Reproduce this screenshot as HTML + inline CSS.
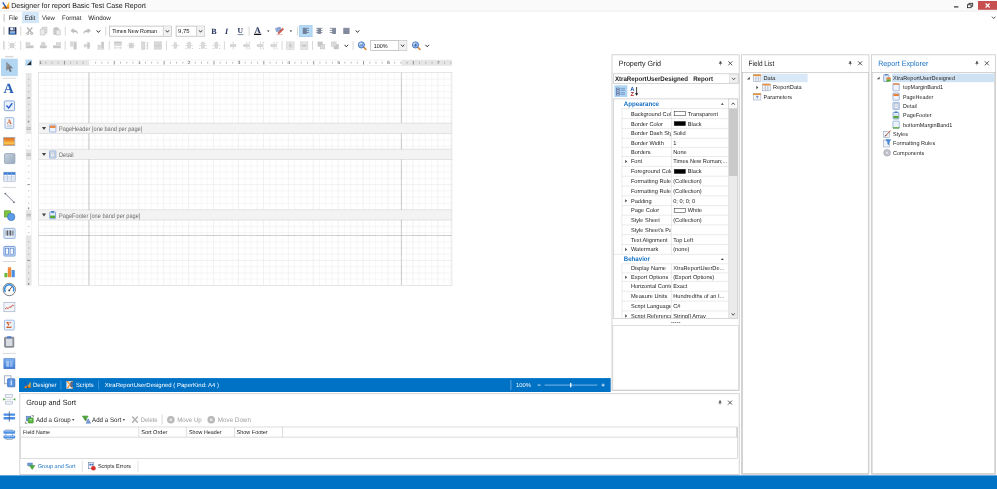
<!DOCTYPE html>
<html lang="en"><head><meta charset="utf-8"><title>Designer for report Basic Test Case Report</title>
<style>
html,body{margin:0;padding:0;background:#fff;overflow:hidden}
svg{display:block;will-change:transform;font-family:"Liberation Sans",sans-serif;text-rendering:geometricPrecision}
</style></head><body>
<svg width="997" height="489" viewBox="0 0 997 489">
<defs><filter id="soft" x="-6" y="-6" width="1009" height="501" filterUnits="userSpaceOnUse"><feGaussianBlur stdDeviation="0.32"/></filter></defs>
<g filter="url(#soft)">
<rect x="-6" y="-6" width="1009" height="501" fill="#fff"/>
<rect x="-6" y="-6" width="1009" height="16.7" fill="#fafafa"/>
<line x1="-6" y1="11.05" x2="1003" y2="11.05" stroke="#ececec" stroke-width="1"/>
<g transform="translate(1.2 1.2) scale(1)">
<defs><linearGradient id="gxra" x1="0" y1="0" x2="0" y2="1"><stop offset="0" stop-color="#ffd83a"/><stop offset="1" stop-color="#ee8a1a"/></linearGradient></defs>
<path d="M0.6 7.4 L4.2 3.6 L5.2 5.2 L8 0.2 V7.4 Z" fill="url(#gxra)"/>
<path d="M0.6 7.4 H8 V6.4 H1.6 Z" fill="#d9701a"/>
<line x1="1.6" y1="1.2" x2="4.8" y2="6.4" stroke="#2c58b6" stroke-width="1.3"/>
<path d="M4.2 6.6 L5.4 6.0 L5.4 7.8 Z" fill="#222"/>
</g>
<text x="11.2" y="8.18" font-size="7.3" fill="#222" textLength="134.8" lengthAdjust="spacingAndGlyphs">Designer for report Basic Test Case Report</text>
<line x1="954" y1="6.9" x2="958.4" y2="6.9" stroke="#222" stroke-width="1.1"/>
<rect x="969" y="3.3" width="3.7" height="2.9" fill="#fafafa" stroke="#222" stroke-width="0.8"/>
<rect x="967.4" y="4.8" width="3.7" height="2.9" fill="#fafafa" stroke="#222" stroke-width="0.8"/>
<rect x="978" y="1" width="25" height="8.8" fill="#c75050"/>
<line x1="985.6" y1="3.5" x2="989.6" y2="7.5" stroke="#fff" stroke-width="1.2"/>
<line x1="985.6" y1="7.5" x2="989.6" y2="3.5" stroke="#fff" stroke-width="1.2"/>
<line x1="4.1" y1="14" x2="4.1" y2="21.6" stroke="#b4b4b4" stroke-width="0.9"/>
<rect x="22.1" y="11.7" width="16.7" height="11.4" fill="#d4e7f8"/>
<text x="8.8" y="19.68" font-size="6.4" fill="#222" textLength="9.2" lengthAdjust="spacingAndGlyphs">File</text>
<text x="24.8" y="19.68" font-size="6.4" fill="#222" textLength="10.4" lengthAdjust="spacingAndGlyphs">Edit</text>
<text x="42" y="19.68" font-size="6.4" fill="#222" textLength="12.8" lengthAdjust="spacingAndGlyphs">View</text>
<text x="62" y="19.68" font-size="6.4" fill="#222" textLength="19.4" lengthAdjust="spacingAndGlyphs">Format</text>
<text x="88.3" y="19.68" font-size="6.4" fill="#222" textLength="22.5" lengthAdjust="spacingAndGlyphs">Window</text>
<path d="M992 16.65 L993.7 18.55 L995.4 16.65" fill="none" stroke="#444" stroke-width="0.9"/>
<line x1="3.9" y1="26.7" x2="3.9" y2="34.9" stroke="#b4b4b4" stroke-width="0.9"/>
<g transform="translate(8.6 27.2)">
<path d="M0 0.4 Q0 0 0.4 0 H7.4 Q7.8 0 7.8 0.4 V7.3 H0 Z" fill="#1b2c55"/>
<rect x="1.6" y="0.3" width="4.6" height="2.8" fill="#e9eef7"/>
<rect x="4.7" y="0.6" width="1" height="1.9" fill="#1b2c55"/>
<rect x="1.2" y="4.3" width="5.4" height="2.9" fill="#4e8fd6"/>
<rect x="1.2" y="4.3" width="5.4" height="0.9" fill="#dfe9f6"/>
</g>
<line x1="20.7" y1="26.6" x2="20.7" y2="35.6" stroke="#c9c9c9" stroke-width="0.7"/>
<g transform="translate(25.8 27.2)" opacity="0.85">
<line x1="1.3" y1="0.3" x2="5.4" y2="5.2" stroke="#a4a4a4" stroke-width="1.3"/>
<line x1="6.5" y1="0.3" x2="2.4" y2="5.2" stroke="#a4a4a4" stroke-width="1.3"/>
<circle cx="1.9" cy="6.2" r="1.1" fill="#d8d8d8" stroke="#9c9c9c" stroke-width="0.9"/>
<circle cx="5.9" cy="6.2" r="1.1" fill="#d8d8d8" stroke="#9c9c9c" stroke-width="0.9"/>
</g>
<g transform="translate(40 27.2)" opacity="0.75">
<path d="M2.3 0 H6.9 V6 H2.3 Z" fill="#d6d6d6" stroke="#9a9a9a" stroke-width="0.5"/>
<path d="M0.3 1.8 H4.9 V7.8 H0.3 Z" fill="#e4e4e4" stroke="#9a9a9a" stroke-width="0.5"/>
</g>
<g transform="translate(53.4 27.2)" opacity="0.75">
<path d="M0.3 0.9 H5.2 V7.2 H0.3 Z" fill="#bdbdbd" stroke="#9a9a9a" stroke-width="0.5"/>
<rect x="1.5" y="0.1" width="2.5" height="1.4" fill="#a5a5a5"/>
<path d="M2.7 2.7 H6.9 V7.8 H2.7 Z" fill="#e8e8e8" stroke="#9a9a9a" stroke-width="0.5"/>
</g>
<line x1="65.2" y1="26.6" x2="65.2" y2="35.6" stroke="#c9c9c9" stroke-width="0.7"/>
<g transform="translate(70.3 27.8)" opacity="0.9">
<path d="M0 3 L3.4 0.2 V1.9 C6 1.9 7.9 3.4 8 6.6 C7 4.8 5.6 4.1 3.4 4.1 V5.8 Z" fill="#b9b9b9"/>
</g>
<g transform="translate(91 27.8)" opacity="0.9">
<g transform="scale(-1 1)">
<path d="M0 3 L3.4 0.2 V1.9 C6 1.9 7.9 3.4 8 6.6 C7 4.8 5.6 4.1 3.4 4.1 V5.8 Z" fill="#b9b9b9"/>
</g>
</g>
<path d="M96.6 30.4 L98.4 32.4 L100.2 30.4" fill="none" stroke="#333" stroke-width="1"/>
<line x1="105.7" y1="26.6" x2="105.7" y2="35.6" stroke="#c9c9c9" stroke-width="0.7"/>
<rect x="109.4" y="26.1" width="62.1" height="10.1" fill="#fff" stroke="#b2b2b2" stroke-width="0.7"/>
<rect x="163.3" y="26.4" width="7.9" height="9.5" fill="#f1f1f1"/>
<line x1="163.3" y1="26.1" x2="163.3" y2="36.2" stroke="#b9b9b9" stroke-width="0.6"/>
<path d="M165.8 30.3 L167.4 32.2 L169 30.3" fill="none" stroke="#333" stroke-width="0.95"/>
<text x="112.2" y="33.17" font-size="5.8" fill="#111" textLength="44.8" lengthAdjust="spacingAndGlyphs">Times New Roman</text>
<rect x="176.1" y="26.1" width="28.6" height="10.1" fill="#fff" stroke="#b2b2b2" stroke-width="0.7"/>
<rect x="196.5" y="26.4" width="7.9" height="9.5" fill="#f1f1f1"/>
<line x1="196.5" y1="26.1" x2="196.5" y2="36.2" stroke="#b9b9b9" stroke-width="0.6"/>
<path d="M199 30.3 L200.6 32.2 L202.2 30.3" fill="none" stroke="#333" stroke-width="0.95"/>
<text x="178.1" y="33.17" font-size="5.8" fill="#111" textLength="11.5" lengthAdjust="spacingAndGlyphs">9,75</text>
<text x="211.2" y="33.72" font-size="8" fill="#26355e" font-weight="bold" font-family="'Liberation Serif', serif">B</text>
<text x="224.9" y="33.72" font-size="8" fill="#26355e" font-weight="bold" font-style="italic" font-family="'Liberation Serif', serif">I</text>
<text x="237.6" y="33.38" font-size="7.6" fill="#26355e" font-weight="bold" font-family="'Liberation Serif', serif">U</text>
<line x1="237.6" y1="34.6" x2="243.4" y2="34.6" stroke="#26355e" stroke-width="0.6"/>
<line x1="249.1" y1="26.6" x2="249.1" y2="35.6" stroke="#c9c9c9" stroke-width="0.7"/>
<text x="254.5" y="32.82" font-size="8.6" fill="#26355e" font-weight="bold" font-family="'Liberation Serif', serif">A</text>
<rect x="254" y="33.7" width="7.2" height="1.3" fill="#111"/>
<path d="M267.1 30.55 h2.4 l-1.2 1.5 z" fill="#222"/>
<g transform="translate(275.2 26.8)">
<path d="M0.2 1.6 L5 0.2 L6.2 3.8 L1.4 5.2 Z" fill="#b4c8e6" stroke="#4f6fb0" stroke-width="0.45"/>
<path d="M1.2 2.4 L4.6 1.4 M1.8 3.8 L5.2 2.8" fill="none" stroke="#3f5fa8" stroke-width="0.5"/>
<path d="M3.2 5.4 L7.4 1.2 L8.6 2.4 L4.4 6.6 L2.8 7 Z" fill="#d8564a" stroke="#9a3530" stroke-width="0.3"/>
<rect x="1.2" y="7.4" width="6.2" height="0.9" fill="#e7b1b1"/>
</g>
<path d="M289.7 30.55 h2.4 l-1.2 1.5 z" fill="#222"/>
<line x1="297.5" y1="26.6" x2="297.5" y2="35.6" stroke="#c9c9c9" stroke-width="0.7"/>
<rect x="299" y="25.1" width="13.6" height="11.9" fill="#a8d1f0"/>
<rect x="300" y="26.1" width="11.6" height="9.9" fill="#b6d9f4"/>
<g transform="translate(302.8 27.9)">
<rect x="0" y="0" width="6.2" height="0.66" fill="#5d6780"/>
<rect x="0" y="1.04" width="3.8" height="0.66" fill="#5d6780"/>
<rect x="0" y="2.08" width="6.2" height="0.66" fill="#5d6780"/>
<rect x="0" y="3.12" width="3.8" height="0.66" fill="#5d6780"/>
<rect x="0" y="4.16" width="6.2" height="0.66" fill="#5d6780"/>
<rect x="0" y="5.2" width="3.8" height="0.66" fill="#5d6780"/>
<rect x="0" y="0" width="3.8" height="5.86" fill="#5d6780" opacity="0.35"/>
</g>
<g transform="translate(316.2 27.9)">
<rect x="0" y="0" width="6.2" height="0.66" fill="#5d6780"/>
<rect x="1.4" y="1.04" width="3.4" height="0.66" fill="#5d6780"/>
<rect x="0" y="2.08" width="6.2" height="0.66" fill="#5d6780"/>
<rect x="1.4" y="3.12" width="3.4" height="0.66" fill="#5d6780"/>
<rect x="0" y="4.16" width="6.2" height="0.66" fill="#5d6780"/>
<rect x="1.4" y="5.2" width="3.4" height="0.66" fill="#5d6780"/>
<rect x="1.4" y="0" width="3.4" height="5.86" fill="#5d6780" opacity="0.35"/>
</g>
<g transform="translate(329.8 27.9)">
<rect x="0" y="0" width="6.2" height="0.66" fill="#5d6780"/>
<rect x="2.4" y="1.04" width="3.8" height="0.66" fill="#5d6780"/>
<rect x="0" y="2.08" width="6.2" height="0.66" fill="#5d6780"/>
<rect x="2.4" y="3.12" width="3.8" height="0.66" fill="#5d6780"/>
<rect x="0" y="4.16" width="6.2" height="0.66" fill="#5d6780"/>
<rect x="2.4" y="5.2" width="3.8" height="0.66" fill="#5d6780"/>
<rect x="2.4" y="0" width="3.8" height="5.86" fill="#5d6780" opacity="0.35"/>
</g>
<g transform="translate(343.3 27.9)">
<rect x="0" y="0" width="6.2" height="0.66" fill="#5d6780"/>
<rect x="0" y="1.04" width="6.2" height="0.66" fill="#5d6780"/>
<rect x="0" y="2.08" width="6.2" height="0.66" fill="#5d6780"/>
<rect x="0" y="3.12" width="6.2" height="0.66" fill="#5d6780"/>
<rect x="0" y="4.16" width="6.2" height="0.66" fill="#5d6780"/>
<rect x="0" y="5.2" width="6.2" height="0.66" fill="#5d6780"/>
<rect x="0" y="0" width="6.2" height="5.86" fill="#5d6780" opacity="0.35"/>
</g>
<path d="M355.7 30.4 L357.5 32.4 L359.3 30.4" fill="none" stroke="#333" stroke-width="1"/>
<line x1="3.9" y1="41.2" x2="3.9" y2="49.6" stroke="#b4b4b4" stroke-width="0.9"/>
<g transform="translate(8 41.6)" opacity="0.62">
<rect x="0" y="0" width="0.7" height="0.7" fill="#a6a6a6"/>
<rect x="0" y="3.6" width="0.7" height="0.7" fill="#a6a6a6"/>
<rect x="0" y="7.1" width="0.7" height="0.7" fill="#a6a6a6"/>
<rect x="3.6" y="0" width="0.7" height="0.7" fill="#a6a6a6"/>
<rect x="3.6" y="7.1" width="0.7" height="0.7" fill="#a6a6a6"/>
<rect x="7.1" y="0" width="0.7" height="0.7" fill="#a6a6a6"/>
<rect x="7.1" y="3.6" width="0.7" height="0.7" fill="#a6a6a6"/>
<rect x="7.1" y="7.1" width="0.7" height="0.7" fill="#a6a6a6"/>
<rect x="2" y="2" width="4" height="4" fill="#c4c4c4" stroke="#a6a6a6" stroke-width="0.5"/>
<line x1="0.8" y1="0.8" x2="7.2" y2="7.2" stroke="#a6a6a6" stroke-width="0.5"/>
<line x1="7.2" y1="0.8" x2="0.8" y2="7.2" stroke="#a6a6a6" stroke-width="0.5"/>
</g>
<line x1="20.7" y1="41" x2="20.7" y2="50" stroke="#c9c9c9" stroke-width="0.7"/>
<g transform="translate(25.7 41.6)" opacity="0.62">
<rect x="0.5" y="1" width="3.8" height="2.3" fill="#c4c4c4" stroke="#a6a6a6" stroke-width="0.4"/>
<rect x="0.5" y="4.1" width="7" height="2.3" fill="#a6a6a6" stroke="#a6a6a6" stroke-width="0.4"/>
<line x1="0.2" y1="0.4" x2="0.2" y2="7" stroke="#a6a6a6" stroke-width="0.4"/>
</g>
<g transform="translate(39.6 41.6)" opacity="0.62">
<rect x="2" y="1" width="3.4" height="2.3" fill="#c4c4c4" stroke="#a6a6a6" stroke-width="0.4"/>
<rect x="0.5" y="4.1" width="6.4" height="2.3" fill="#a6a6a6" stroke="#a6a6a6" stroke-width="0.4"/>
<line x1="3.7" y1="0.2" x2="3.7" y2="7.2" stroke="#a6a6a6" stroke-width="0.4"/>
</g>
<g transform="translate(53.2 41.6)" opacity="0.62">
<rect x="3.2" y="1" width="3.8" height="2.3" fill="#c4c4c4" stroke="#a6a6a6" stroke-width="0.4"/>
<rect x="0" y="4.1" width="7" height="2.3" fill="#a6a6a6" stroke="#a6a6a6" stroke-width="0.4"/>
<line x1="7.3" y1="0.4" x2="7.3" y2="7" stroke="#a6a6a6" stroke-width="0.4"/>
</g>
<line x1="65.2" y1="41" x2="65.2" y2="50" stroke="#c9c9c9" stroke-width="0.7"/>
<g transform="translate(69.9 41.6)" opacity="0.62">
<line x1="0" y1="0.4" x2="7" y2="0.4" stroke="#a6a6a6" stroke-width="0.7"/>
<rect x="0.6" y="1.2" width="2.4" height="3.4" fill="#c4c4c4" stroke="#a6a6a6" stroke-width="0.4"/>
<rect x="4" y="1.2" width="2.4" height="6.4" fill="#a6a6a6" stroke="#a6a6a6" stroke-width="0.4"/>
</g>
<g transform="translate(83.6 41.6)" opacity="0.62">
<line x1="0" y1="4" x2="7" y2="4" stroke="#a6a6a6" stroke-width="0.6"/>
<rect x="0.6" y="2.6" width="2.2" height="2.8" fill="#c4c4c4" stroke="#a6a6a6" stroke-width="0.4"/>
<rect x="3.8" y="1" width="2.2" height="6" fill="#a6a6a6" stroke="#a6a6a6" stroke-width="0.4"/>
</g>
<g transform="translate(97.4 41.6)" opacity="0.62">
<line x1="0" y1="7.6" x2="7" y2="7.6" stroke="#a6a6a6" stroke-width="0.7"/>
<rect x="0.6" y="3.4" width="2.4" height="3.4" fill="#c4c4c4" stroke="#a6a6a6" stroke-width="0.4"/>
<rect x="4" y="0.4" width="2.4" height="6.4" fill="#a6a6a6" stroke="#a6a6a6" stroke-width="0.4"/>
</g>
<line x1="109.3" y1="41" x2="109.3" y2="50" stroke="#c9c9c9" stroke-width="0.7"/>
<g transform="translate(114 41.6)" opacity="0.62">
<rect x="0.3" y="0.3" width="7.2" height="3.6" fill="#c4c4c4" stroke="#a6a6a6" stroke-width="0.5"/>
<rect x="0.3" y="0.3" width="7.2" height="1.1" fill="#a6a6a6"/>
<line x1="0.3" y1="6.2" x2="7.5" y2="6.2" stroke="#a6a6a6" stroke-width="0.6"/>
<path d="M2 5 L0.6 6.2 L2 7.4 M5.8 5 L7.2 6.2 L5.8 7.4" fill="none" stroke="#a6a6a6" stroke-width="0.6"/>
</g>
<g transform="translate(127.2 41.6)" opacity="0.62">
<rect x="2" y="2" width="4" height="4" fill="#c4c4c4" stroke="#a6a6a6" stroke-width="0.5"/>
<line x1="4" y1="4" x2="4" y2="0" stroke="#a6a6a6" stroke-width="0.5"/>
<line x1="4" y1="4" x2="4" y2="8" stroke="#a6a6a6" stroke-width="0.5"/>
<line x1="4" y1="4" x2="0" y2="4" stroke="#a6a6a6" stroke-width="0.5"/>
<line x1="4" y1="4" x2="8" y2="4" stroke="#a6a6a6" stroke-width="0.5"/>
<line x1="4" y1="4" x2="1" y2="1" stroke="#a6a6a6" stroke-width="0.5"/>
<line x1="4" y1="4" x2="7" y2="7" stroke="#a6a6a6" stroke-width="0.5"/>
<line x1="4" y1="4" x2="1" y2="7" stroke="#a6a6a6" stroke-width="0.5"/>
<line x1="4" y1="4" x2="7" y2="1" stroke="#a6a6a6" stroke-width="0.5"/>
</g>
<g transform="translate(141.4 41.6)" opacity="0.62">
<rect x="0.3" y="0.3" width="3.2" height="7.4" fill="#c4c4c4" stroke="#a6a6a6" stroke-width="0.5"/>
<line x1="6" y1="0.4" x2="6" y2="7.6" stroke="#a6a6a6" stroke-width="0.6"/>
<path d="M4.9 2 L6 0.6 L7.1 2 M4.9 6 L6 7.4 L7.1 6" fill="none" stroke="#a6a6a6" stroke-width="0.6"/>
<circle cx="6" cy="4" r="0.9" fill="#a6a6a6"/>
</g>
<g transform="translate(154 41.6)" opacity="0.62">
<rect x="0.2" y="0.2" width="3.4" height="3.4" fill="#c4c4c4" stroke="#a6a6a6" stroke-width="0.5"/>
<rect x="0.2" y="4.2" width="3.4" height="3.4" fill="#c4c4c4" stroke="#a6a6a6" stroke-width="0.5"/>
<rect x="4.2" y="0.2" width="3.4" height="3.4" fill="#c4c4c4" stroke="#a6a6a6" stroke-width="0.5"/>
<rect x="4.2" y="4.2" width="3.4" height="3.4" fill="#c4c4c4" stroke="#a6a6a6" stroke-width="0.5"/>
<line x1="0" y1="4" x2="8" y2="4" stroke="#a6a6a6" stroke-width="0.5"/>
</g>
<line x1="166.5" y1="41" x2="166.5" y2="50" stroke="#c9c9c9" stroke-width="0.7"/>
<g transform="translate(171.5 41.6)" opacity="0.62">
<rect x="2.6" y="1.2" width="2.6" height="5.4" fill="#c4c4c4" stroke="#a6a6a6" stroke-width="0.5"/>
<line x1="0" y1="4" x2="2.4" y2="4" stroke="#a6a6a6" stroke-width="0.6"/>
<line x1="5.4" y1="4" x2="8" y2="4" stroke="#a6a6a6" stroke-width="0.6"/>
</g>
<g transform="translate(185.2 41.6)" opacity="0.62">
<rect x="2.6" y="1.2" width="2.6" height="5.4" fill="#c4c4c4" stroke="#a6a6a6" stroke-width="0.5"/>
<line x1="0" y1="4" x2="2.4" y2="4" stroke="#a6a6a6" stroke-width="0.6"/>
<line x1="5.4" y1="4" x2="8" y2="4" stroke="#a6a6a6" stroke-width="0.6"/>
<rect x="0.2" y="6.4" width="1" height="1" fill="#a6a6a6"/>
<rect x="6.6" y="6.4" width="1" height="1" fill="#a6a6a6"/>
<rect x="3.4" y="0" width="1" height="1" fill="#a6a6a6"/>
<path d="M1 2.2 L2.4 0.8 M5.4 0.8 L6.8 2.2" fill="none" stroke="#a6a6a6" stroke-width="0.5"/>
</g>
<g transform="translate(199 41.6)" opacity="0.62">
<rect x="2.6" y="1.2" width="2.6" height="5.4" fill="#c4c4c4" stroke="#a6a6a6" stroke-width="0.5"/>
<line x1="0" y1="4" x2="2.4" y2="4" stroke="#a6a6a6" stroke-width="0.6"/>
<line x1="5.4" y1="4" x2="8" y2="4" stroke="#a6a6a6" stroke-width="0.6"/>
<rect x="0.2" y="6.4" width="1" height="1" fill="#a6a6a6"/>
<rect x="6.6" y="6.4" width="1" height="1" fill="#a6a6a6"/>
<rect x="3.4" y="0" width="1" height="1" fill="#a6a6a6"/>
<path d="M1 2.2 L2.4 0.8 M5.4 0.8 L6.8 2.2" fill="none" stroke="#a6a6a6" stroke-width="0.5"/>
</g>
<g transform="translate(212.4 41.6)" opacity="0.62">
<rect x="2.6" y="1.2" width="2.6" height="5.4" fill="#c4c4c4" stroke="#a6a6a6" stroke-width="0.5"/>
<line x1="0" y1="4" x2="2.4" y2="4" stroke="#a6a6a6" stroke-width="0.6"/>
<line x1="5.4" y1="4" x2="8" y2="4" stroke="#a6a6a6" stroke-width="0.6"/>
<rect x="0.2" y="6.4" width="1" height="1" fill="#a6a6a6"/>
<rect x="6.6" y="6.4" width="1" height="1" fill="#a6a6a6"/>
<rect x="3.4" y="0" width="1" height="1" fill="#a6a6a6"/>
<path d="M1 2.2 L2.4 0.8 M5.4 0.8 L6.8 2.2" fill="none" stroke="#a6a6a6" stroke-width="0.5"/>
</g>
<line x1="224.4" y1="41" x2="224.4" y2="50" stroke="#c9c9c9" stroke-width="0.7"/>
<g transform="translate(229.2 41.6)" opacity="0.62">
<rect x="1.4" y="2.8" width="5.2" height="2.4" fill="#c4c4c4" stroke="#a6a6a6" stroke-width="0.5"/>
<line x1="4" y1="0" x2="4" y2="2.6" stroke="#a6a6a6" stroke-width="0.6"/>
<line x1="4" y1="5.4" x2="4" y2="8" stroke="#a6a6a6" stroke-width="0.6"/>
</g>
<g transform="translate(242.8 41.6)" opacity="0.62">
<rect x="1.4" y="2.8" width="5.2" height="2.4" fill="#c4c4c4" stroke="#a6a6a6" stroke-width="0.5"/>
<line x1="4" y1="0" x2="4" y2="2.6" stroke="#a6a6a6" stroke-width="0.6"/>
<line x1="4" y1="5.4" x2="4" y2="8" stroke="#a6a6a6" stroke-width="0.6"/>
<rect x="6.6" y="0.2" width="1" height="1" fill="#a6a6a6"/>
<rect x="6.6" y="6.6" width="1" height="1" fill="#a6a6a6"/>
<rect x="0.2" y="3.4" width="1" height="1" fill="#a6a6a6"/>
<path d="M5.6 1 L7 2.4 M5.6 7 L7 5.6" fill="none" stroke="#a6a6a6" stroke-width="0.5"/>
</g>
<g transform="translate(256.4 41.6)" opacity="0.62">
<rect x="1.4" y="2.8" width="5.2" height="2.4" fill="#c4c4c4" stroke="#a6a6a6" stroke-width="0.5"/>
<line x1="4" y1="0" x2="4" y2="2.6" stroke="#a6a6a6" stroke-width="0.6"/>
<line x1="4" y1="5.4" x2="4" y2="8" stroke="#a6a6a6" stroke-width="0.6"/>
<rect x="6.6" y="0.2" width="1" height="1" fill="#a6a6a6"/>
<rect x="6.6" y="6.6" width="1" height="1" fill="#a6a6a6"/>
<rect x="0.2" y="3.4" width="1" height="1" fill="#a6a6a6"/>
<path d="M5.6 1 L7 2.4 M5.6 7 L7 5.6" fill="none" stroke="#a6a6a6" stroke-width="0.5"/>
</g>
<g transform="translate(270 41.6)" opacity="0.62">
<rect x="1.4" y="2.8" width="5.2" height="2.4" fill="#c4c4c4" stroke="#a6a6a6" stroke-width="0.5"/>
<line x1="4" y1="0" x2="4" y2="2.6" stroke="#a6a6a6" stroke-width="0.6"/>
<line x1="4" y1="5.4" x2="4" y2="8" stroke="#a6a6a6" stroke-width="0.6"/>
<rect x="6.6" y="0.2" width="1" height="1" fill="#a6a6a6"/>
<rect x="6.6" y="6.6" width="1" height="1" fill="#a6a6a6"/>
<rect x="0.2" y="3.4" width="1" height="1" fill="#a6a6a6"/>
<path d="M5.6 1 L7 2.4 M5.6 7 L7 5.6" fill="none" stroke="#a6a6a6" stroke-width="0.5"/>
</g>
<line x1="282.1" y1="41" x2="282.1" y2="50" stroke="#c9c9c9" stroke-width="0.7"/>
<g transform="translate(286.4 41.6)" opacity="0.62">
<rect x="0.3" y="0.3" width="7.4" height="7.4" fill="#dedede" stroke="#a6a6a6" stroke-width="0.5"/>
<line x1="4" y1="0.3" x2="4" y2="7.7" stroke="#a6a6a6" stroke-width="0.5"/>
<line x1="0.3" y1="2.6" x2="7.7" y2="2.6" stroke="#a6a6a6" stroke-width="0.4"/>
<line x1="0.3" y1="5.4" x2="7.7" y2="5.4" stroke="#a6a6a6" stroke-width="0.4"/>
<rect x="2.6" y="2.9" width="2.8" height="2.2" fill="#a6a6a6"/>
</g>
<g transform="translate(300.2 41.6)" opacity="0.62">
<rect x="0.3" y="0.3" width="7.4" height="7.4" fill="#dedede" stroke="#a6a6a6" stroke-width="0.5"/>
<line x1="0.3" y1="4" x2="7.7" y2="4" stroke="#a6a6a6" stroke-width="0.5"/>
<line x1="2.2" y1="0.3" x2="2.2" y2="7.7" stroke="#a6a6a6" stroke-width="0.4"/>
<line x1="5.8" y1="0.3" x2="5.8" y2="7.7" stroke="#a6a6a6" stroke-width="0.4"/>
<rect x="2.5" y="2.8" width="3" height="2.4" fill="#a6a6a6"/>
</g>
<line x1="312.5" y1="41" x2="312.5" y2="50" stroke="#c9c9c9" stroke-width="0.7"/>
<g transform="translate(317.6 41.6)" opacity="0.62">
<rect x="0.3" y="0.3" width="4.6" height="4.6" fill="#a6a6a6" stroke="#999" stroke-width="0.4"/>
<rect x="2.6" y="2.8" width="4.6" height="4.6" fill="#c4c4c4" stroke="#999" stroke-width="0.4"/>
</g>
<g transform="translate(331.2 41.6)" opacity="0.62">
<rect x="2.8" y="2.8" width="4.6" height="4.6" fill="#a6a6a6" stroke="#999" stroke-width="0.4"/>
<rect x="0.3" y="0.3" width="4.6" height="4.6" fill="#c4c4c4" stroke="#999" stroke-width="0.4"/>
</g>
<path d="M344.5 44.8 L346.3 46.8 L348.1 44.8" fill="none" stroke="#333" stroke-width="1"/>
<line x1="353.1" y1="41" x2="353.1" y2="50" stroke="#c9c9c9" stroke-width="0.7"/>
<g transform="translate(357.9 41.4)">
<line x1="5.2" y1="5.2" x2="8" y2="8" stroke="#d98a3a" stroke-width="1.5" stroke-linecap="round"/>
<circle cx="3.5" cy="3.5" r="3.1" fill="#8db4e8" stroke="#3f6cba" stroke-width="0.8"/>
<circle cx="2.9" cy="2.7" r="1.6" fill="#d9e8fa" opacity="0.9"/>
<line x1="2" y1="3.6" x2="5" y2="3.6" stroke="#2a4f9a" stroke-width="0.7"/>
</g>
<rect x="370.7" y="40.4" width="36.1" height="10.2" fill="#fff" stroke="#b2b2b2" stroke-width="0.7"/>
<rect x="398.5" y="40.7" width="8" height="9.6" fill="#f1f1f1"/>
<line x1="398.5" y1="40.4" x2="398.5" y2="50.6" stroke="#b9b9b9" stroke-width="0.6"/>
<path d="M401.05 44.65 L402.65 46.55 L404.25 44.65" fill="none" stroke="#333" stroke-width="0.95"/>
<text x="373.8" y="47.57" font-size="5.8" fill="#111" textLength="13.9" lengthAdjust="spacingAndGlyphs">100%</text>
<g transform="translate(412 41.4)">
<line x1="5.2" y1="5.2" x2="8" y2="8" stroke="#d98a3a" stroke-width="1.5" stroke-linecap="round"/>
<circle cx="3.5" cy="3.5" r="3.1" fill="#8db4e8" stroke="#3f6cba" stroke-width="0.8"/>
<circle cx="2.9" cy="2.7" r="1.6" fill="#d9e8fa" opacity="0.9"/>
<line x1="2" y1="3.6" x2="5" y2="3.6" stroke="#2a4f9a" stroke-width="0.7"/>
<line x1="3.5" y1="2.1" x2="3.5" y2="5.1" stroke="#2a4f9a" stroke-width="0.7"/>
</g>
<path d="M425.4 44.8 L427.2 46.8 L429 44.8" fill="none" stroke="#333" stroke-width="1"/>
<rect x="5.2" y="55.9" width="8.2" height="1.5" fill="#d9d9d9"/>
<rect x="1" y="58.7" width="16.8" height="17.4" fill="#b3d6f2"/>
<g transform="translate(6.6 62.3)">
<defs><linearGradient id="gptr" x1="0" y1="0" x2="1" y2="1"><stop offset="0" stop-color="#a9abae"/><stop offset="1" stop-color="#55575b"/></linearGradient></defs>
<path d="M0 0 L0 8.0 L1.9 6.3 L3.4 9.5 L4.7 8.9 L3.3 5.8 L5.9 5.7 Z" fill="url(#gptr)" stroke="#5c5e62" stroke-width="0.4"/>
</g>
<line x1="2.5" y1="78.3" x2="16" y2="78.3" stroke="#cfcfcf" stroke-width="0.8"/>
<text x="3.6" y="93.13" font-size="14.2" fill="#2a62b8" font-weight="bold" font-family="'Liberation Serif', serif">A</text>
<g transform="translate(3.9 100.5)">
<rect x="0.4" y="0.4" width="10.2" height="9.8" fill="#eaf1fb" stroke="#7ea3d8" stroke-width="0.9" rx="1"/>
<path d="M2.6 5 L4.8 7.4 L8.4 2.8" fill="none" stroke="#2a62c8" stroke-width="1.4"/>
</g>
<g transform="translate(4.6 117.3)">
<rect x="0.4" y="0.4" width="8.8" height="10.6" fill="#f2f6fc" stroke="#7ea3d8" stroke-width="0.8" rx="0.7"/>
<text x="2.2" y="6.68" font-size="7" fill="#d0602c" font-weight="bold" font-family="'Liberation Serif', serif">A</text>
<line x1="2" y1="7.8" x2="7.6" y2="7.8" stroke="#9ab" stroke-width="0.5"/>
<line x1="2" y1="9" x2="7.6" y2="9" stroke="#9ab" stroke-width="0.5"/>
</g>
<g transform="translate(3.3 137.1)">
<defs><linearGradient id="gpic" x1="0" y1="0" x2="0" y2="1"><stop offset="0" stop-color="#d9651f"/><stop offset="0.55" stop-color="#f5a63a"/><stop offset="0.7" stop-color="#fbd05a"/><stop offset="1" stop-color="#d8701f"/></linearGradient></defs>
<rect x="0.3" y="0.3" width="11.2" height="8.2" fill="url(#gpic)" stroke="#a9adb5" stroke-width="0.8"/>
</g>
<g transform="translate(4.2 153.3)">
<defs><linearGradient id="gpan" x1="0" y1="0" x2="1" y2="1"><stop offset="0" stop-color="#c9d3de"/><stop offset="1" stop-color="#98a9bd"/></linearGradient></defs>
<rect x="0.3" y="0.3" width="10.4" height="10" fill="url(#gpan)" stroke="#8a9bb0" stroke-width="0.7" rx="1"/>
</g>
<g transform="translate(3.5 171.9)">
<rect x="0.3" y="0.3" width="11.4" height="9" fill="#f6f8fb" stroke="#8ea3c4" stroke-width="0.6"/>
<rect x="0.3" y="0.3" width="11.4" height="2.6" fill="#3f7fd6"/>
<line x1="4" y1="0.3" x2="4" y2="9.3" stroke="#9fb2d0" stroke-width="0.5"/>
<line x1="7.9" y1="0.3" x2="7.9" y2="9.3" stroke="#9fb2d0" stroke-width="0.5"/>
<line x1="0.3" y1="5" x2="11.7" y2="5" stroke="#9fb2d0" stroke-width="0.5"/>
<line x1="0.3" y1="7.1" x2="11.7" y2="7.1" stroke="#9fb2d0" stroke-width="0.5"/>
</g>
<line x1="2.5" y1="187.4" x2="16" y2="187.4" stroke="#cfcfcf" stroke-width="0.8"/>
<g transform="translate(4.4 192.7)">
<line x1="0.8" y1="0.8" x2="9.6" y2="9.6" stroke="#6b7483" stroke-width="0.9"/>
<circle cx="0.9" cy="0.9" r="0.9" fill="#6b7483"/>
<circle cx="9.6" cy="9.6" r="0.9" fill="#6b7483"/>
</g>
<g transform="translate(4 210.5)">
<rect x="0.3" y="0.3" width="6.2" height="6.2" fill="#7fc243" stroke="#4f9a26" stroke-width="0.6"/>
<circle cx="7.2" cy="6.4" r="3.7" fill="#5c9be6" stroke="#2f6cc0" stroke-width="0.6"/>
</g>
<g transform="translate(3.5 228)">
<rect x="0.4" y="0.4" width="11.2" height="10" fill="#e6eefa" stroke="#7ea3d8" stroke-width="0.8" rx="0.8"/>
<rect x="2.2" y="2.4" width="0.7" height="5.2" fill="#4a4f5c"/>
<rect x="3.6" y="2.4" width="1.1" height="5.2" fill="#4a4f5c"/>
<rect x="5.4" y="2.4" width="0.6" height="5.2" fill="#4a4f5c"/>
<rect x="6.6" y="2.4" width="1.1" height="5.2" fill="#4a4f5c"/>
<rect x="8.4" y="2.4" width="0.6" height="5.2" fill="#4a4f5c"/>
<rect x="9.4" y="2.4" width="0.5" height="5.2" fill="#4a4f5c"/>
</g>
<g transform="translate(3.5 246)">
<rect x="0.4" y="0.4" width="11.2" height="9.6" fill="#dbe8fa" stroke="#5f8fd6" stroke-width="0.9" rx="0.8"/>
<rect x="2" y="2.2" width="3.2" height="6" fill="#f4f8fe" stroke="#3f6fc0" stroke-width="0.6"/>
<rect x="6.6" y="2.2" width="3.2" height="6" fill="#f4f8fe" stroke="#3f6fc0" stroke-width="0.6"/>
</g>
<line x1="2.5" y1="261.5" x2="16" y2="261.5" stroke="#cfcfcf" stroke-width="0.8"/>
<g transform="translate(4.2 267)">
<rect x="0.2" y="6" width="3" height="4.2" fill="#6ab83a" rx="0.4"/>
<rect x="3.6" y="0.2" width="3.4" height="10" fill="#ef8b3a" rx="0.4"/>
<rect x="7.4" y="3" width="3.2" height="7.2" fill="#4f8fde" rx="0.4"/>
</g>
<g transform="translate(2.8 283)">
<circle cx="6.5" cy="6.5" r="6.2" fill="#fbfbfb" stroke="#4a4a4a" stroke-width="0.7"/>
<path d="M2.6 9 A4.6 4.6 0 1 1 10.6 8.4" fill="none" stroke="#2f8be6" stroke-width="1.5"/>
<line x1="6.4" y1="7.4" x2="9.4" y2="3.4" stroke="#7a3a2a" stroke-width="0.9"/>
<circle cx="6.4" cy="7.4" r="0.9" fill="#444"/>
</g>
<g transform="translate(3.6 302)">
<rect x="0.3" y="0.3" width="11" height="9.4" fill="#f1f4f9" stroke="#a5b1c4" stroke-width="0.7"/>
<path d="M1.4 7 L3.2 5.8 L4.6 6.6 L6.2 4.6 L7.4 5.4 L9 3 L10.2 3.8" fill="none" stroke="#d04a3a" stroke-width="0.9"/>
</g>
<g transform="translate(4 319.8)">
<rect x="0.4" y="0.4" width="9.8" height="9.8" fill="#eef3fb" stroke="#8aaee0" stroke-width="0.8" rx="0.8"/>
<text x="2.1" y="8.46" font-size="9" fill="#d0602c" font-weight="bold" font-family="'Liberation Serif', serif">Σ</text>
</g>
<g transform="translate(4.2 336)">
<rect x="0.4" y="1.2" width="9.2" height="10" fill="#8f949c" stroke="#5e636b" stroke-width="0.6" rx="0.6"/>
<rect x="1.8" y="2.8" width="6.4" height="7.2" fill="#d9dde3"/>
<rect x="2.8" y="0.2" width="4.4" height="2" fill="#4f7fd0" rx="0.5"/>
</g>
<line x1="2.5" y1="353.4" x2="16" y2="353.4" stroke="#cfcfcf" stroke-width="0.8"/>
<g transform="translate(3.6 358.4)">
<defs><linearGradient id="gsub" x1="0" y1="0" x2="0" y2="1"><stop offset="0" stop-color="#7fb0ef"/><stop offset="1" stop-color="#3f7bd6"/></linearGradient></defs>
<rect x="0.3" y="0.3" width="11" height="10" fill="url(#gsub)" stroke="#3a6fc4" stroke-width="0.6"/>
<rect x="2.6" y="2.4" width="2.8" height="6" fill="#b7d2f6" opacity="0.8"/>
<rect x="6.2" y="2.4" width="2.8" height="6" fill="#9cc0f2" opacity="0.8"/>
</g>
<g transform="translate(4 375.4)">
<rect x="0.4" y="0.4" width="6.6" height="8" fill="#f7f9fc" stroke="#8a9ab3" stroke-width="0.7"/>
<rect x="3.6" y="3.4" width="7.2" height="8" fill="#5b93e2" stroke="#2f63b6" stroke-width="0.7" rx="0.5"/>
<rect x="6.7" y="5.4" width="1" height="4.4" fill="#fff"/>
<rect x="6.7" y="4.2" width="1" height="0.8" fill="#fff"/>
</g>
<g transform="translate(3.3 394.3)">
<rect x="2.4" y="0.2" width="7" height="3" fill="#eef2f8" stroke="#9aa8bd" stroke-width="0.5"/>
<rect x="2.4" y="6.8" width="7" height="3" fill="#eef2f8" stroke="#9aa8bd" stroke-width="0.5"/>
<line x1="0" y1="5" x2="12" y2="5" stroke="#8a93a3" stroke-width="0.5" stroke-dasharray="1 0.7"/>
<path d="M0 3.6 L2 5 L0 6.4 Z" fill="#3fa83a"/>
<path d="M12 3.6 L10 5 L12 6.4 Z" fill="#3fa83a"/>
</g>
<g transform="translate(3.3 411.4)">
<rect x="0.2" y="2" width="11.6" height="2.3" fill="#4a8fe4" rx="0.7"/>
<rect x="0.2" y="5.7" width="11.6" height="2.3" fill="#4a8fe4" rx="0.7"/>
<line x1="6" y1="0" x2="6" y2="10.4" stroke="#3a4c74" stroke-width="0.7"/>
</g>
<g transform="translate(3.3 430)">
<rect x="2.6" y="0" width="6.8" height="9.6" fill="none" stroke="#7585a3" stroke-width="0.55"/>
<rect x="0.2" y="0.6" width="11.6" height="3.1" fill="#4a8fe4" rx="0.9"/>
<rect x="0.2" y="5.4" width="11.6" height="3.1" fill="#4a8fe4" rx="0.9"/>
<rect x="1.2" y="1.2" width="9.6" height="0.9" fill="#9cc4f4" opacity="0.8"/>
<rect x="1.2" y="6" width="9.6" height="0.9" fill="#9cc4f4" opacity="0.8"/>
</g>
<rect x="25.4" y="59.6" width="6.6" height="6.2" fill="#b7d7f3"/>
<path d="M31.2 60.8 V65 H27 Z" fill="#2a2a2a"/>
<rect x="39.2" y="60" width="412.7" height="5.6" fill="#fff" stroke="#e6e6e6" stroke-width="0.5"/>
<rect x="39.2" y="60" width="49.95" height="5.6" fill="#e6e6e6"/>
<rect x="401.55" y="60" width="50.35" height="5.6" fill="#e6e6e6"/>
<rect x="39.1" y="61.2" width="0.4" height="3.2" fill="#e0a060" opacity="0.4"/>
<rect x="41.4" y="61.2" width="0.4" height="3.2" fill="#6a9adf" opacity="0.35"/>
<text x="39.3" y="64.33" font-size="4.5" fill="#555">1</text>
<line x1="45.73" y1="61.8" x2="45.73" y2="63.6" stroke="#8a8a8a" stroke-width="0.6"/>
<line x1="51.96" y1="61.8" x2="51.96" y2="63.6" stroke="#8a8a8a" stroke-width="0.6"/>
<line x1="58.2" y1="61.8" x2="58.2" y2="63.6" stroke="#8a8a8a" stroke-width="0.6"/>
<line x1="64.43" y1="60.9" x2="64.43" y2="64.5" stroke="#6a6a6a" stroke-width="0.7"/>
<line x1="70.66" y1="61.8" x2="70.66" y2="63.6" stroke="#8a8a8a" stroke-width="0.6"/>
<line x1="76.89" y1="61.8" x2="76.89" y2="63.6" stroke="#8a8a8a" stroke-width="0.6"/>
<line x1="83.12" y1="61.8" x2="83.12" y2="63.6" stroke="#8a8a8a" stroke-width="0.6"/>
<line x1="95.58" y1="61.8" x2="95.58" y2="63.6" stroke="#8a8a8a" stroke-width="0.6"/>
<line x1="101.81" y1="61.8" x2="101.81" y2="63.6" stroke="#8a8a8a" stroke-width="0.6"/>
<line x1="108.04" y1="61.8" x2="108.04" y2="63.6" stroke="#8a8a8a" stroke-width="0.6"/>
<line x1="114.27" y1="60.9" x2="114.27" y2="64.5" stroke="#6a6a6a" stroke-width="0.7"/>
<line x1="120.51" y1="61.8" x2="120.51" y2="63.6" stroke="#8a8a8a" stroke-width="0.6"/>
<line x1="126.74" y1="61.8" x2="126.74" y2="63.6" stroke="#8a8a8a" stroke-width="0.6"/>
<line x1="132.97" y1="61.8" x2="132.97" y2="63.6" stroke="#8a8a8a" stroke-width="0.6"/>
<rect x="137.8" y="61.2" width="0.4" height="3.2" fill="#e0a060" opacity="0.4"/>
<rect x="140.1" y="61.2" width="0.4" height="3.2" fill="#6a9adf" opacity="0.35"/>
<text x="138" y="64.33" font-size="4.5" fill="#555">1</text>
<line x1="145.43" y1="61.8" x2="145.43" y2="63.6" stroke="#8a8a8a" stroke-width="0.6"/>
<line x1="151.66" y1="61.8" x2="151.66" y2="63.6" stroke="#8a8a8a" stroke-width="0.6"/>
<line x1="157.89" y1="61.8" x2="157.89" y2="63.6" stroke="#8a8a8a" stroke-width="0.6"/>
<line x1="164.12" y1="60.9" x2="164.12" y2="64.5" stroke="#6a6a6a" stroke-width="0.7"/>
<line x1="170.35" y1="61.8" x2="170.35" y2="63.6" stroke="#8a8a8a" stroke-width="0.6"/>
<line x1="176.58" y1="61.8" x2="176.58" y2="63.6" stroke="#8a8a8a" stroke-width="0.6"/>
<line x1="182.81" y1="61.8" x2="182.81" y2="63.6" stroke="#8a8a8a" stroke-width="0.6"/>
<rect x="187.65" y="61.2" width="0.4" height="3.2" fill="#e0a060" opacity="0.4"/>
<rect x="189.95" y="61.2" width="0.4" height="3.2" fill="#6a9adf" opacity="0.35"/>
<text x="187.85" y="64.33" font-size="4.5" fill="#555">2</text>
<line x1="195.28" y1="61.8" x2="195.28" y2="63.6" stroke="#8a8a8a" stroke-width="0.6"/>
<line x1="201.51" y1="61.8" x2="201.51" y2="63.6" stroke="#8a8a8a" stroke-width="0.6"/>
<line x1="207.74" y1="61.8" x2="207.74" y2="63.6" stroke="#8a8a8a" stroke-width="0.6"/>
<line x1="213.97" y1="60.9" x2="213.97" y2="64.5" stroke="#6a6a6a" stroke-width="0.7"/>
<line x1="220.2" y1="61.8" x2="220.2" y2="63.6" stroke="#8a8a8a" stroke-width="0.6"/>
<line x1="226.43" y1="61.8" x2="226.43" y2="63.6" stroke="#8a8a8a" stroke-width="0.6"/>
<line x1="232.66" y1="61.8" x2="232.66" y2="63.6" stroke="#8a8a8a" stroke-width="0.6"/>
<rect x="237.49" y="61.2" width="0.4" height="3.2" fill="#e0a060" opacity="0.4"/>
<rect x="239.79" y="61.2" width="0.4" height="3.2" fill="#6a9adf" opacity="0.35"/>
<text x="237.69" y="64.33" font-size="4.5" fill="#555">3</text>
<line x1="245.12" y1="61.8" x2="245.12" y2="63.6" stroke="#8a8a8a" stroke-width="0.6"/>
<line x1="251.36" y1="61.8" x2="251.36" y2="63.6" stroke="#8a8a8a" stroke-width="0.6"/>
<line x1="257.59" y1="61.8" x2="257.59" y2="63.6" stroke="#8a8a8a" stroke-width="0.6"/>
<line x1="263.82" y1="60.9" x2="263.82" y2="64.5" stroke="#6a6a6a" stroke-width="0.7"/>
<line x1="270.05" y1="61.8" x2="270.05" y2="63.6" stroke="#8a8a8a" stroke-width="0.6"/>
<line x1="276.28" y1="61.8" x2="276.28" y2="63.6" stroke="#8a8a8a" stroke-width="0.6"/>
<line x1="282.51" y1="61.8" x2="282.51" y2="63.6" stroke="#8a8a8a" stroke-width="0.6"/>
<rect x="287.34" y="61.2" width="0.4" height="3.2" fill="#e0a060" opacity="0.4"/>
<rect x="289.64" y="61.2" width="0.4" height="3.2" fill="#6a9adf" opacity="0.35"/>
<text x="287.54" y="64.33" font-size="4.5" fill="#555">4</text>
<line x1="294.97" y1="61.8" x2="294.97" y2="63.6" stroke="#8a8a8a" stroke-width="0.6"/>
<line x1="301.2" y1="61.8" x2="301.2" y2="63.6" stroke="#8a8a8a" stroke-width="0.6"/>
<line x1="307.44" y1="61.8" x2="307.44" y2="63.6" stroke="#8a8a8a" stroke-width="0.6"/>
<line x1="313.67" y1="60.9" x2="313.67" y2="64.5" stroke="#6a6a6a" stroke-width="0.7"/>
<line x1="319.9" y1="61.8" x2="319.9" y2="63.6" stroke="#8a8a8a" stroke-width="0.6"/>
<line x1="326.13" y1="61.8" x2="326.13" y2="63.6" stroke="#8a8a8a" stroke-width="0.6"/>
<line x1="332.36" y1="61.8" x2="332.36" y2="63.6" stroke="#8a8a8a" stroke-width="0.6"/>
<rect x="337.19" y="61.2" width="0.4" height="3.2" fill="#e0a060" opacity="0.4"/>
<rect x="339.49" y="61.2" width="0.4" height="3.2" fill="#6a9adf" opacity="0.35"/>
<text x="337.39" y="64.33" font-size="4.5" fill="#555">5</text>
<line x1="344.82" y1="61.8" x2="344.82" y2="63.6" stroke="#8a8a8a" stroke-width="0.6"/>
<line x1="351.05" y1="61.8" x2="351.05" y2="63.6" stroke="#8a8a8a" stroke-width="0.6"/>
<line x1="357.28" y1="61.8" x2="357.28" y2="63.6" stroke="#8a8a8a" stroke-width="0.6"/>
<line x1="363.51" y1="60.9" x2="363.51" y2="64.5" stroke="#6a6a6a" stroke-width="0.7"/>
<line x1="369.75" y1="61.8" x2="369.75" y2="63.6" stroke="#8a8a8a" stroke-width="0.6"/>
<line x1="375.98" y1="61.8" x2="375.98" y2="63.6" stroke="#8a8a8a" stroke-width="0.6"/>
<line x1="382.21" y1="61.8" x2="382.21" y2="63.6" stroke="#8a8a8a" stroke-width="0.6"/>
<rect x="387.04" y="61.2" width="0.4" height="3.2" fill="#e0a060" opacity="0.4"/>
<rect x="389.34" y="61.2" width="0.4" height="3.2" fill="#6a9adf" opacity="0.35"/>
<text x="387.24" y="64.33" font-size="4.5" fill="#555">6</text>
<line x1="394.67" y1="61.8" x2="394.67" y2="63.6" stroke="#8a8a8a" stroke-width="0.6"/>
<line x1="400.9" y1="61.8" x2="400.9" y2="63.6" stroke="#8a8a8a" stroke-width="0.6"/>
<line x1="407.13" y1="61.8" x2="407.13" y2="63.6" stroke="#8a8a8a" stroke-width="0.6"/>
<line x1="413.36" y1="60.9" x2="413.36" y2="64.5" stroke="#6a6a6a" stroke-width="0.7"/>
<line x1="419.59" y1="61.8" x2="419.59" y2="63.6" stroke="#8a8a8a" stroke-width="0.6"/>
<line x1="425.82" y1="61.8" x2="425.82" y2="63.6" stroke="#8a8a8a" stroke-width="0.6"/>
<line x1="432.06" y1="61.8" x2="432.06" y2="63.6" stroke="#8a8a8a" stroke-width="0.6"/>
<rect x="436.89" y="61.2" width="0.4" height="3.2" fill="#e0a060" opacity="0.4"/>
<rect x="439.19" y="61.2" width="0.4" height="3.2" fill="#6a9adf" opacity="0.35"/>
<text x="437.09" y="64.33" font-size="4.5" fill="#555">7</text>
<line x1="444.52" y1="61.8" x2="444.52" y2="63.6" stroke="#8a8a8a" stroke-width="0.6"/>
<line x1="450.75" y1="61.8" x2="450.75" y2="63.6" stroke="#8a8a8a" stroke-width="0.6"/>
<rect x="38.6" y="72.6" width="413.3" height="213" fill="#fff"/>
<rect x="25.8" y="73" width="5.8" height="212.6" fill="#e6e6e6"/>
<line x1="45.33" y1="73" x2="45.33" y2="123.5" stroke="#efefef" stroke-width="0.52"/>
<line x1="51.56" y1="73" x2="51.56" y2="123.5" stroke="#efefef" stroke-width="0.52"/>
<line x1="57.79" y1="73" x2="57.79" y2="123.5" stroke="#efefef" stroke-width="0.52"/>
<line x1="64.02" y1="73" x2="64.02" y2="123.5" stroke="#e4e4e4" stroke-width="0.52"/>
<line x1="70.25" y1="73" x2="70.25" y2="123.5" stroke="#efefef" stroke-width="0.52"/>
<line x1="76.49" y1="73" x2="76.49" y2="123.5" stroke="#efefef" stroke-width="0.52"/>
<line x1="82.72" y1="73" x2="82.72" y2="123.5" stroke="#efefef" stroke-width="0.52"/>
<line x1="88.95" y1="73" x2="88.95" y2="123.5" stroke="#e4e4e4" stroke-width="0.52"/>
<line x1="95.18" y1="73" x2="95.18" y2="123.5" stroke="#efefef" stroke-width="0.52"/>
<line x1="101.41" y1="73" x2="101.41" y2="123.5" stroke="#efefef" stroke-width="0.52"/>
<line x1="107.64" y1="73" x2="107.64" y2="123.5" stroke="#efefef" stroke-width="0.52"/>
<line x1="113.87" y1="73" x2="113.87" y2="123.5" stroke="#e4e4e4" stroke-width="0.52"/>
<line x1="120.1" y1="73" x2="120.1" y2="123.5" stroke="#efefef" stroke-width="0.52"/>
<line x1="126.33" y1="73" x2="126.33" y2="123.5" stroke="#efefef" stroke-width="0.52"/>
<line x1="132.56" y1="73" x2="132.56" y2="123.5" stroke="#efefef" stroke-width="0.52"/>
<line x1="138.8" y1="73" x2="138.8" y2="123.5" stroke="#e4e4e4" stroke-width="0.52"/>
<line x1="145.03" y1="73" x2="145.03" y2="123.5" stroke="#efefef" stroke-width="0.52"/>
<line x1="151.26" y1="73" x2="151.26" y2="123.5" stroke="#efefef" stroke-width="0.52"/>
<line x1="157.49" y1="73" x2="157.49" y2="123.5" stroke="#efefef" stroke-width="0.52"/>
<line x1="163.72" y1="73" x2="163.72" y2="123.5" stroke="#e4e4e4" stroke-width="0.52"/>
<line x1="169.95" y1="73" x2="169.95" y2="123.5" stroke="#efefef" stroke-width="0.52"/>
<line x1="176.18" y1="73" x2="176.18" y2="123.5" stroke="#efefef" stroke-width="0.52"/>
<line x1="182.41" y1="73" x2="182.41" y2="123.5" stroke="#efefef" stroke-width="0.52"/>
<line x1="188.64" y1="73" x2="188.64" y2="123.5" stroke="#e4e4e4" stroke-width="0.52"/>
<line x1="194.88" y1="73" x2="194.88" y2="123.5" stroke="#efefef" stroke-width="0.52"/>
<line x1="201.11" y1="73" x2="201.11" y2="123.5" stroke="#efefef" stroke-width="0.52"/>
<line x1="207.34" y1="73" x2="207.34" y2="123.5" stroke="#efefef" stroke-width="0.52"/>
<line x1="213.57" y1="73" x2="213.57" y2="123.5" stroke="#e4e4e4" stroke-width="0.52"/>
<line x1="219.8" y1="73" x2="219.8" y2="123.5" stroke="#efefef" stroke-width="0.52"/>
<line x1="226.03" y1="73" x2="226.03" y2="123.5" stroke="#efefef" stroke-width="0.52"/>
<line x1="232.26" y1="73" x2="232.26" y2="123.5" stroke="#efefef" stroke-width="0.52"/>
<line x1="238.49" y1="73" x2="238.49" y2="123.5" stroke="#e4e4e4" stroke-width="0.52"/>
<line x1="244.72" y1="73" x2="244.72" y2="123.5" stroke="#efefef" stroke-width="0.52"/>
<line x1="250.95" y1="73" x2="250.95" y2="123.5" stroke="#efefef" stroke-width="0.52"/>
<line x1="257.19" y1="73" x2="257.19" y2="123.5" stroke="#efefef" stroke-width="0.52"/>
<line x1="263.42" y1="73" x2="263.42" y2="123.5" stroke="#e4e4e4" stroke-width="0.52"/>
<line x1="269.65" y1="73" x2="269.65" y2="123.5" stroke="#efefef" stroke-width="0.52"/>
<line x1="275.88" y1="73" x2="275.88" y2="123.5" stroke="#efefef" stroke-width="0.52"/>
<line x1="282.11" y1="73" x2="282.11" y2="123.5" stroke="#efefef" stroke-width="0.52"/>
<line x1="288.34" y1="73" x2="288.34" y2="123.5" stroke="#e4e4e4" stroke-width="0.52"/>
<line x1="294.57" y1="73" x2="294.57" y2="123.5" stroke="#efefef" stroke-width="0.52"/>
<line x1="300.8" y1="73" x2="300.8" y2="123.5" stroke="#efefef" stroke-width="0.52"/>
<line x1="307.03" y1="73" x2="307.03" y2="123.5" stroke="#efefef" stroke-width="0.52"/>
<line x1="313.26" y1="73" x2="313.26" y2="123.5" stroke="#e4e4e4" stroke-width="0.52"/>
<line x1="319.5" y1="73" x2="319.5" y2="123.5" stroke="#efefef" stroke-width="0.52"/>
<line x1="325.73" y1="73" x2="325.73" y2="123.5" stroke="#efefef" stroke-width="0.52"/>
<line x1="331.96" y1="73" x2="331.96" y2="123.5" stroke="#efefef" stroke-width="0.52"/>
<line x1="338.19" y1="73" x2="338.19" y2="123.5" stroke="#e4e4e4" stroke-width="0.52"/>
<line x1="344.42" y1="73" x2="344.42" y2="123.5" stroke="#efefef" stroke-width="0.52"/>
<line x1="350.65" y1="73" x2="350.65" y2="123.5" stroke="#efefef" stroke-width="0.52"/>
<line x1="356.88" y1="73" x2="356.88" y2="123.5" stroke="#efefef" stroke-width="0.52"/>
<line x1="363.11" y1="73" x2="363.11" y2="123.5" stroke="#e4e4e4" stroke-width="0.52"/>
<line x1="369.34" y1="73" x2="369.34" y2="123.5" stroke="#efefef" stroke-width="0.52"/>
<line x1="375.57" y1="73" x2="375.57" y2="123.5" stroke="#efefef" stroke-width="0.52"/>
<line x1="381.81" y1="73" x2="381.81" y2="123.5" stroke="#efefef" stroke-width="0.52"/>
<line x1="388.04" y1="73" x2="388.04" y2="123.5" stroke="#e4e4e4" stroke-width="0.52"/>
<line x1="394.27" y1="73" x2="394.27" y2="123.5" stroke="#efefef" stroke-width="0.52"/>
<line x1="400.5" y1="73" x2="400.5" y2="123.5" stroke="#efefef" stroke-width="0.52"/>
<line x1="406.73" y1="73" x2="406.73" y2="123.5" stroke="#efefef" stroke-width="0.52"/>
<line x1="412.96" y1="73" x2="412.96" y2="123.5" stroke="#e4e4e4" stroke-width="0.52"/>
<line x1="419.19" y1="73" x2="419.19" y2="123.5" stroke="#efefef" stroke-width="0.52"/>
<line x1="425.42" y1="73" x2="425.42" y2="123.5" stroke="#efefef" stroke-width="0.52"/>
<line x1="431.65" y1="73" x2="431.65" y2="123.5" stroke="#efefef" stroke-width="0.52"/>
<line x1="437.88" y1="73" x2="437.88" y2="123.5" stroke="#e4e4e4" stroke-width="0.52"/>
<line x1="444.12" y1="73" x2="444.12" y2="123.5" stroke="#efefef" stroke-width="0.52"/>
<line x1="450.35" y1="73" x2="450.35" y2="123.5" stroke="#efefef" stroke-width="0.52"/>
<line x1="38.6" y1="79.23" x2="451.9" y2="79.23" stroke="#eeeeee" stroke-width="0.52"/>
<line x1="38.6" y1="85.46" x2="451.9" y2="85.46" stroke="#eeeeee" stroke-width="0.52"/>
<line x1="38.6" y1="91.69" x2="451.9" y2="91.69" stroke="#eeeeee" stroke-width="0.52"/>
<line x1="38.6" y1="97.92" x2="451.9" y2="97.92" stroke="#e4e4e4" stroke-width="0.52"/>
<line x1="38.6" y1="104.16" x2="451.9" y2="104.16" stroke="#eeeeee" stroke-width="0.52"/>
<line x1="38.6" y1="110.39" x2="451.9" y2="110.39" stroke="#eeeeee" stroke-width="0.52"/>
<line x1="38.6" y1="116.62" x2="451.9" y2="116.62" stroke="#eeeeee" stroke-width="0.52"/>
<line x1="28.1" y1="79.23" x2="29.3" y2="79.23" stroke="#8a8a8a" stroke-width="0.6"/>
<line x1="28.1" y1="85.46" x2="29.3" y2="85.46" stroke="#8a8a8a" stroke-width="0.6"/>
<line x1="28.1" y1="91.69" x2="29.3" y2="91.69" stroke="#8a8a8a" stroke-width="0.6"/>
<line x1="27.3" y1="97.92" x2="30.1" y2="97.92" stroke="#6a6a6a" stroke-width="0.7"/>
<line x1="28.1" y1="104.16" x2="29.3" y2="104.16" stroke="#8a8a8a" stroke-width="0.6"/>
<line x1="28.1" y1="110.39" x2="29.3" y2="110.39" stroke="#8a8a8a" stroke-width="0.6"/>
<line x1="28.1" y1="116.62" x2="29.3" y2="116.62" stroke="#8a8a8a" stroke-width="0.6"/>
<line x1="45.33" y1="133.7" x2="45.33" y2="149.5" stroke="#efefef" stroke-width="0.52"/>
<line x1="51.56" y1="133.7" x2="51.56" y2="149.5" stroke="#efefef" stroke-width="0.52"/>
<line x1="57.79" y1="133.7" x2="57.79" y2="149.5" stroke="#efefef" stroke-width="0.52"/>
<line x1="64.02" y1="133.7" x2="64.02" y2="149.5" stroke="#e4e4e4" stroke-width="0.52"/>
<line x1="70.25" y1="133.7" x2="70.25" y2="149.5" stroke="#efefef" stroke-width="0.52"/>
<line x1="76.49" y1="133.7" x2="76.49" y2="149.5" stroke="#efefef" stroke-width="0.52"/>
<line x1="82.72" y1="133.7" x2="82.72" y2="149.5" stroke="#efefef" stroke-width="0.52"/>
<line x1="88.95" y1="133.7" x2="88.95" y2="149.5" stroke="#e4e4e4" stroke-width="0.52"/>
<line x1="95.18" y1="133.7" x2="95.18" y2="149.5" stroke="#efefef" stroke-width="0.52"/>
<line x1="101.41" y1="133.7" x2="101.41" y2="149.5" stroke="#efefef" stroke-width="0.52"/>
<line x1="107.64" y1="133.7" x2="107.64" y2="149.5" stroke="#efefef" stroke-width="0.52"/>
<line x1="113.87" y1="133.7" x2="113.87" y2="149.5" stroke="#e4e4e4" stroke-width="0.52"/>
<line x1="120.1" y1="133.7" x2="120.1" y2="149.5" stroke="#efefef" stroke-width="0.52"/>
<line x1="126.33" y1="133.7" x2="126.33" y2="149.5" stroke="#efefef" stroke-width="0.52"/>
<line x1="132.56" y1="133.7" x2="132.56" y2="149.5" stroke="#efefef" stroke-width="0.52"/>
<line x1="138.8" y1="133.7" x2="138.8" y2="149.5" stroke="#e4e4e4" stroke-width="0.52"/>
<line x1="145.03" y1="133.7" x2="145.03" y2="149.5" stroke="#efefef" stroke-width="0.52"/>
<line x1="151.26" y1="133.7" x2="151.26" y2="149.5" stroke="#efefef" stroke-width="0.52"/>
<line x1="157.49" y1="133.7" x2="157.49" y2="149.5" stroke="#efefef" stroke-width="0.52"/>
<line x1="163.72" y1="133.7" x2="163.72" y2="149.5" stroke="#e4e4e4" stroke-width="0.52"/>
<line x1="169.95" y1="133.7" x2="169.95" y2="149.5" stroke="#efefef" stroke-width="0.52"/>
<line x1="176.18" y1="133.7" x2="176.18" y2="149.5" stroke="#efefef" stroke-width="0.52"/>
<line x1="182.41" y1="133.7" x2="182.41" y2="149.5" stroke="#efefef" stroke-width="0.52"/>
<line x1="188.64" y1="133.7" x2="188.64" y2="149.5" stroke="#e4e4e4" stroke-width="0.52"/>
<line x1="194.88" y1="133.7" x2="194.88" y2="149.5" stroke="#efefef" stroke-width="0.52"/>
<line x1="201.11" y1="133.7" x2="201.11" y2="149.5" stroke="#efefef" stroke-width="0.52"/>
<line x1="207.34" y1="133.7" x2="207.34" y2="149.5" stroke="#efefef" stroke-width="0.52"/>
<line x1="213.57" y1="133.7" x2="213.57" y2="149.5" stroke="#e4e4e4" stroke-width="0.52"/>
<line x1="219.8" y1="133.7" x2="219.8" y2="149.5" stroke="#efefef" stroke-width="0.52"/>
<line x1="226.03" y1="133.7" x2="226.03" y2="149.5" stroke="#efefef" stroke-width="0.52"/>
<line x1="232.26" y1="133.7" x2="232.26" y2="149.5" stroke="#efefef" stroke-width="0.52"/>
<line x1="238.49" y1="133.7" x2="238.49" y2="149.5" stroke="#e4e4e4" stroke-width="0.52"/>
<line x1="244.72" y1="133.7" x2="244.72" y2="149.5" stroke="#efefef" stroke-width="0.52"/>
<line x1="250.95" y1="133.7" x2="250.95" y2="149.5" stroke="#efefef" stroke-width="0.52"/>
<line x1="257.19" y1="133.7" x2="257.19" y2="149.5" stroke="#efefef" stroke-width="0.52"/>
<line x1="263.42" y1="133.7" x2="263.42" y2="149.5" stroke="#e4e4e4" stroke-width="0.52"/>
<line x1="269.65" y1="133.7" x2="269.65" y2="149.5" stroke="#efefef" stroke-width="0.52"/>
<line x1="275.88" y1="133.7" x2="275.88" y2="149.5" stroke="#efefef" stroke-width="0.52"/>
<line x1="282.11" y1="133.7" x2="282.11" y2="149.5" stroke="#efefef" stroke-width="0.52"/>
<line x1="288.34" y1="133.7" x2="288.34" y2="149.5" stroke="#e4e4e4" stroke-width="0.52"/>
<line x1="294.57" y1="133.7" x2="294.57" y2="149.5" stroke="#efefef" stroke-width="0.52"/>
<line x1="300.8" y1="133.7" x2="300.8" y2="149.5" stroke="#efefef" stroke-width="0.52"/>
<line x1="307.03" y1="133.7" x2="307.03" y2="149.5" stroke="#efefef" stroke-width="0.52"/>
<line x1="313.26" y1="133.7" x2="313.26" y2="149.5" stroke="#e4e4e4" stroke-width="0.52"/>
<line x1="319.5" y1="133.7" x2="319.5" y2="149.5" stroke="#efefef" stroke-width="0.52"/>
<line x1="325.73" y1="133.7" x2="325.73" y2="149.5" stroke="#efefef" stroke-width="0.52"/>
<line x1="331.96" y1="133.7" x2="331.96" y2="149.5" stroke="#efefef" stroke-width="0.52"/>
<line x1="338.19" y1="133.7" x2="338.19" y2="149.5" stroke="#e4e4e4" stroke-width="0.52"/>
<line x1="344.42" y1="133.7" x2="344.42" y2="149.5" stroke="#efefef" stroke-width="0.52"/>
<line x1="350.65" y1="133.7" x2="350.65" y2="149.5" stroke="#efefef" stroke-width="0.52"/>
<line x1="356.88" y1="133.7" x2="356.88" y2="149.5" stroke="#efefef" stroke-width="0.52"/>
<line x1="363.11" y1="133.7" x2="363.11" y2="149.5" stroke="#e4e4e4" stroke-width="0.52"/>
<line x1="369.34" y1="133.7" x2="369.34" y2="149.5" stroke="#efefef" stroke-width="0.52"/>
<line x1="375.57" y1="133.7" x2="375.57" y2="149.5" stroke="#efefef" stroke-width="0.52"/>
<line x1="381.81" y1="133.7" x2="381.81" y2="149.5" stroke="#efefef" stroke-width="0.52"/>
<line x1="388.04" y1="133.7" x2="388.04" y2="149.5" stroke="#e4e4e4" stroke-width="0.52"/>
<line x1="394.27" y1="133.7" x2="394.27" y2="149.5" stroke="#efefef" stroke-width="0.52"/>
<line x1="400.5" y1="133.7" x2="400.5" y2="149.5" stroke="#efefef" stroke-width="0.52"/>
<line x1="406.73" y1="133.7" x2="406.73" y2="149.5" stroke="#efefef" stroke-width="0.52"/>
<line x1="412.96" y1="133.7" x2="412.96" y2="149.5" stroke="#e4e4e4" stroke-width="0.52"/>
<line x1="419.19" y1="133.7" x2="419.19" y2="149.5" stroke="#efefef" stroke-width="0.52"/>
<line x1="425.42" y1="133.7" x2="425.42" y2="149.5" stroke="#efefef" stroke-width="0.52"/>
<line x1="431.65" y1="133.7" x2="431.65" y2="149.5" stroke="#efefef" stroke-width="0.52"/>
<line x1="437.88" y1="133.7" x2="437.88" y2="149.5" stroke="#e4e4e4" stroke-width="0.52"/>
<line x1="444.12" y1="133.7" x2="444.12" y2="149.5" stroke="#efefef" stroke-width="0.52"/>
<line x1="450.35" y1="133.7" x2="450.35" y2="149.5" stroke="#efefef" stroke-width="0.52"/>
<line x1="38.6" y1="139.93" x2="451.9" y2="139.93" stroke="#eeeeee" stroke-width="0.52"/>
<line x1="38.6" y1="146.16" x2="451.9" y2="146.16" stroke="#eeeeee" stroke-width="0.52"/>
<rect x="26.1" y="133.9" width="5.2" height="15.4" fill="#fff"/>
<line x1="28.1" y1="139.93" x2="29.3" y2="139.93" stroke="#8a8a8a" stroke-width="0.6"/>
<line x1="28.1" y1="146.16" x2="29.3" y2="146.16" stroke="#8a8a8a" stroke-width="0.6"/>
<rect x="38.6" y="123.3" width="413.3" height="10.4" fill="#f3f3f3"/>
<line x1="38.6" y1="123.2" x2="451.9" y2="123.2" stroke="#d2d2d2" stroke-width="0.55"/>
<line x1="38.6" y1="133.5" x2="451.9" y2="133.5" stroke="#d2d2d2" stroke-width="0.55"/>
<path d="M41.9 127 h4.2 l-2.1 3 z" fill="#444"/>
<g transform="translate(49.1 124.5)">
<rect x="0.4" y="0.4" width="6.4" height="7.2" fill="#eef3fb" stroke="#6f94d0" stroke-width="0.6" rx="0.5"/>
<rect x="0.8" y="1.2" width="5.6" height="2.2" fill="#e8813a"/>
</g>
<text x="58.9" y="131.08" font-size="6.4" fill="#6c6c6c" textLength="83.3" lengthAdjust="spacingAndGlyphs">PageHeader [one band per page]</text>
<line x1="26.4" y1="127.85" x2="31" y2="127.85" stroke="#a2a2a2" stroke-width="0.7"/>
<line x1="26.4" y1="129.35" x2="31" y2="129.35" stroke="#a2a2a2" stroke-width="0.7"/>
<line x1="45.33" y1="159.7" x2="45.33" y2="210" stroke="#efefef" stroke-width="0.52"/>
<line x1="51.56" y1="159.7" x2="51.56" y2="210" stroke="#efefef" stroke-width="0.52"/>
<line x1="57.79" y1="159.7" x2="57.79" y2="210" stroke="#efefef" stroke-width="0.52"/>
<line x1="64.02" y1="159.7" x2="64.02" y2="210" stroke="#e4e4e4" stroke-width="0.52"/>
<line x1="70.25" y1="159.7" x2="70.25" y2="210" stroke="#efefef" stroke-width="0.52"/>
<line x1="76.49" y1="159.7" x2="76.49" y2="210" stroke="#efefef" stroke-width="0.52"/>
<line x1="82.72" y1="159.7" x2="82.72" y2="210" stroke="#efefef" stroke-width="0.52"/>
<line x1="88.95" y1="159.7" x2="88.95" y2="210" stroke="#e4e4e4" stroke-width="0.52"/>
<line x1="95.18" y1="159.7" x2="95.18" y2="210" stroke="#efefef" stroke-width="0.52"/>
<line x1="101.41" y1="159.7" x2="101.41" y2="210" stroke="#efefef" stroke-width="0.52"/>
<line x1="107.64" y1="159.7" x2="107.64" y2="210" stroke="#efefef" stroke-width="0.52"/>
<line x1="113.87" y1="159.7" x2="113.87" y2="210" stroke="#e4e4e4" stroke-width="0.52"/>
<line x1="120.1" y1="159.7" x2="120.1" y2="210" stroke="#efefef" stroke-width="0.52"/>
<line x1="126.33" y1="159.7" x2="126.33" y2="210" stroke="#efefef" stroke-width="0.52"/>
<line x1="132.56" y1="159.7" x2="132.56" y2="210" stroke="#efefef" stroke-width="0.52"/>
<line x1="138.8" y1="159.7" x2="138.8" y2="210" stroke="#e4e4e4" stroke-width="0.52"/>
<line x1="145.03" y1="159.7" x2="145.03" y2="210" stroke="#efefef" stroke-width="0.52"/>
<line x1="151.26" y1="159.7" x2="151.26" y2="210" stroke="#efefef" stroke-width="0.52"/>
<line x1="157.49" y1="159.7" x2="157.49" y2="210" stroke="#efefef" stroke-width="0.52"/>
<line x1="163.72" y1="159.7" x2="163.72" y2="210" stroke="#e4e4e4" stroke-width="0.52"/>
<line x1="169.95" y1="159.7" x2="169.95" y2="210" stroke="#efefef" stroke-width="0.52"/>
<line x1="176.18" y1="159.7" x2="176.18" y2="210" stroke="#efefef" stroke-width="0.52"/>
<line x1="182.41" y1="159.7" x2="182.41" y2="210" stroke="#efefef" stroke-width="0.52"/>
<line x1="188.64" y1="159.7" x2="188.64" y2="210" stroke="#e4e4e4" stroke-width="0.52"/>
<line x1="194.88" y1="159.7" x2="194.88" y2="210" stroke="#efefef" stroke-width="0.52"/>
<line x1="201.11" y1="159.7" x2="201.11" y2="210" stroke="#efefef" stroke-width="0.52"/>
<line x1="207.34" y1="159.7" x2="207.34" y2="210" stroke="#efefef" stroke-width="0.52"/>
<line x1="213.57" y1="159.7" x2="213.57" y2="210" stroke="#e4e4e4" stroke-width="0.52"/>
<line x1="219.8" y1="159.7" x2="219.8" y2="210" stroke="#efefef" stroke-width="0.52"/>
<line x1="226.03" y1="159.7" x2="226.03" y2="210" stroke="#efefef" stroke-width="0.52"/>
<line x1="232.26" y1="159.7" x2="232.26" y2="210" stroke="#efefef" stroke-width="0.52"/>
<line x1="238.49" y1="159.7" x2="238.49" y2="210" stroke="#e4e4e4" stroke-width="0.52"/>
<line x1="244.72" y1="159.7" x2="244.72" y2="210" stroke="#efefef" stroke-width="0.52"/>
<line x1="250.95" y1="159.7" x2="250.95" y2="210" stroke="#efefef" stroke-width="0.52"/>
<line x1="257.19" y1="159.7" x2="257.19" y2="210" stroke="#efefef" stroke-width="0.52"/>
<line x1="263.42" y1="159.7" x2="263.42" y2="210" stroke="#e4e4e4" stroke-width="0.52"/>
<line x1="269.65" y1="159.7" x2="269.65" y2="210" stroke="#efefef" stroke-width="0.52"/>
<line x1="275.88" y1="159.7" x2="275.88" y2="210" stroke="#efefef" stroke-width="0.52"/>
<line x1="282.11" y1="159.7" x2="282.11" y2="210" stroke="#efefef" stroke-width="0.52"/>
<line x1="288.34" y1="159.7" x2="288.34" y2="210" stroke="#e4e4e4" stroke-width="0.52"/>
<line x1="294.57" y1="159.7" x2="294.57" y2="210" stroke="#efefef" stroke-width="0.52"/>
<line x1="300.8" y1="159.7" x2="300.8" y2="210" stroke="#efefef" stroke-width="0.52"/>
<line x1="307.03" y1="159.7" x2="307.03" y2="210" stroke="#efefef" stroke-width="0.52"/>
<line x1="313.26" y1="159.7" x2="313.26" y2="210" stroke="#e4e4e4" stroke-width="0.52"/>
<line x1="319.5" y1="159.7" x2="319.5" y2="210" stroke="#efefef" stroke-width="0.52"/>
<line x1="325.73" y1="159.7" x2="325.73" y2="210" stroke="#efefef" stroke-width="0.52"/>
<line x1="331.96" y1="159.7" x2="331.96" y2="210" stroke="#efefef" stroke-width="0.52"/>
<line x1="338.19" y1="159.7" x2="338.19" y2="210" stroke="#e4e4e4" stroke-width="0.52"/>
<line x1="344.42" y1="159.7" x2="344.42" y2="210" stroke="#efefef" stroke-width="0.52"/>
<line x1="350.65" y1="159.7" x2="350.65" y2="210" stroke="#efefef" stroke-width="0.52"/>
<line x1="356.88" y1="159.7" x2="356.88" y2="210" stroke="#efefef" stroke-width="0.52"/>
<line x1="363.11" y1="159.7" x2="363.11" y2="210" stroke="#e4e4e4" stroke-width="0.52"/>
<line x1="369.34" y1="159.7" x2="369.34" y2="210" stroke="#efefef" stroke-width="0.52"/>
<line x1="375.57" y1="159.7" x2="375.57" y2="210" stroke="#efefef" stroke-width="0.52"/>
<line x1="381.81" y1="159.7" x2="381.81" y2="210" stroke="#efefef" stroke-width="0.52"/>
<line x1="388.04" y1="159.7" x2="388.04" y2="210" stroke="#e4e4e4" stroke-width="0.52"/>
<line x1="394.27" y1="159.7" x2="394.27" y2="210" stroke="#efefef" stroke-width="0.52"/>
<line x1="400.5" y1="159.7" x2="400.5" y2="210" stroke="#efefef" stroke-width="0.52"/>
<line x1="406.73" y1="159.7" x2="406.73" y2="210" stroke="#efefef" stroke-width="0.52"/>
<line x1="412.96" y1="159.7" x2="412.96" y2="210" stroke="#e4e4e4" stroke-width="0.52"/>
<line x1="419.19" y1="159.7" x2="419.19" y2="210" stroke="#efefef" stroke-width="0.52"/>
<line x1="425.42" y1="159.7" x2="425.42" y2="210" stroke="#efefef" stroke-width="0.52"/>
<line x1="431.65" y1="159.7" x2="431.65" y2="210" stroke="#efefef" stroke-width="0.52"/>
<line x1="437.88" y1="159.7" x2="437.88" y2="210" stroke="#e4e4e4" stroke-width="0.52"/>
<line x1="444.12" y1="159.7" x2="444.12" y2="210" stroke="#efefef" stroke-width="0.52"/>
<line x1="450.35" y1="159.7" x2="450.35" y2="210" stroke="#efefef" stroke-width="0.52"/>
<line x1="38.6" y1="165.93" x2="451.9" y2="165.93" stroke="#eeeeee" stroke-width="0.52"/>
<line x1="38.6" y1="172.16" x2="451.9" y2="172.16" stroke="#eeeeee" stroke-width="0.52"/>
<line x1="38.6" y1="178.39" x2="451.9" y2="178.39" stroke="#eeeeee" stroke-width="0.52"/>
<line x1="38.6" y1="184.62" x2="451.9" y2="184.62" stroke="#e4e4e4" stroke-width="0.52"/>
<line x1="38.6" y1="190.85" x2="451.9" y2="190.85" stroke="#eeeeee" stroke-width="0.52"/>
<line x1="38.6" y1="197.09" x2="451.9" y2="197.09" stroke="#eeeeee" stroke-width="0.52"/>
<line x1="38.6" y1="203.32" x2="451.9" y2="203.32" stroke="#eeeeee" stroke-width="0.52"/>
<rect x="26.1" y="159.9" width="5.2" height="49.9" fill="#fff"/>
<line x1="28.1" y1="165.93" x2="29.3" y2="165.93" stroke="#8a8a8a" stroke-width="0.6"/>
<line x1="28.1" y1="172.16" x2="29.3" y2="172.16" stroke="#8a8a8a" stroke-width="0.6"/>
<line x1="28.1" y1="178.39" x2="29.3" y2="178.39" stroke="#8a8a8a" stroke-width="0.6"/>
<line x1="27.3" y1="184.62" x2="30.1" y2="184.62" stroke="#6a6a6a" stroke-width="0.7"/>
<line x1="28.1" y1="190.85" x2="29.3" y2="190.85" stroke="#8a8a8a" stroke-width="0.6"/>
<line x1="28.1" y1="197.09" x2="29.3" y2="197.09" stroke="#8a8a8a" stroke-width="0.6"/>
<line x1="28.1" y1="203.32" x2="29.3" y2="203.32" stroke="#8a8a8a" stroke-width="0.6"/>
<rect x="38.6" y="149.3" width="413.3" height="10.4" fill="#f3f3f3"/>
<line x1="38.6" y1="149.2" x2="451.9" y2="149.2" stroke="#d2d2d2" stroke-width="0.55"/>
<line x1="38.6" y1="159.5" x2="451.9" y2="159.5" stroke="#d2d2d2" stroke-width="0.55"/>
<path d="M41.9 153 h4.2 l-2.1 3 z" fill="#444"/>
<g transform="translate(49.1 150.5)">
<rect x="0.4" y="0.4" width="6.4" height="7.2" fill="#dfe8f6" stroke="#6f94d0" stroke-width="0.6" rx="0.5"/>
<rect x="1.7" y="1.6" width="3.8" height="4.8" fill="#f6f8fc" stroke="#8a98b4" stroke-width="0.4"/>
<line x1="2.6" y1="3" x2="4.6" y2="3" stroke="#7d8cab" stroke-width="0.4"/>
<line x1="2.6" y1="4.4" x2="4.6" y2="4.4" stroke="#7d8cab" stroke-width="0.4"/>
</g>
<text x="58.9" y="157.08" font-size="6.4" fill="#6c6c6c" textLength="14.6" lengthAdjust="spacingAndGlyphs">Detail</text>
<line x1="26.4" y1="153.85" x2="31" y2="153.85" stroke="#a2a2a2" stroke-width="0.7"/>
<line x1="26.4" y1="155.35" x2="31" y2="155.35" stroke="#a2a2a2" stroke-width="0.7"/>
<line x1="45.33" y1="220.2" x2="45.33" y2="235.5" stroke="#efefef" stroke-width="0.52"/>
<line x1="51.56" y1="220.2" x2="51.56" y2="235.5" stroke="#efefef" stroke-width="0.52"/>
<line x1="57.79" y1="220.2" x2="57.79" y2="235.5" stroke="#efefef" stroke-width="0.52"/>
<line x1="64.02" y1="220.2" x2="64.02" y2="235.5" stroke="#e4e4e4" stroke-width="0.52"/>
<line x1="70.25" y1="220.2" x2="70.25" y2="235.5" stroke="#efefef" stroke-width="0.52"/>
<line x1="76.49" y1="220.2" x2="76.49" y2="235.5" stroke="#efefef" stroke-width="0.52"/>
<line x1="82.72" y1="220.2" x2="82.72" y2="235.5" stroke="#efefef" stroke-width="0.52"/>
<line x1="88.95" y1="220.2" x2="88.95" y2="235.5" stroke="#e4e4e4" stroke-width="0.52"/>
<line x1="95.18" y1="220.2" x2="95.18" y2="235.5" stroke="#efefef" stroke-width="0.52"/>
<line x1="101.41" y1="220.2" x2="101.41" y2="235.5" stroke="#efefef" stroke-width="0.52"/>
<line x1="107.64" y1="220.2" x2="107.64" y2="235.5" stroke="#efefef" stroke-width="0.52"/>
<line x1="113.87" y1="220.2" x2="113.87" y2="235.5" stroke="#e4e4e4" stroke-width="0.52"/>
<line x1="120.1" y1="220.2" x2="120.1" y2="235.5" stroke="#efefef" stroke-width="0.52"/>
<line x1="126.33" y1="220.2" x2="126.33" y2="235.5" stroke="#efefef" stroke-width="0.52"/>
<line x1="132.56" y1="220.2" x2="132.56" y2="235.5" stroke="#efefef" stroke-width="0.52"/>
<line x1="138.8" y1="220.2" x2="138.8" y2="235.5" stroke="#e4e4e4" stroke-width="0.52"/>
<line x1="145.03" y1="220.2" x2="145.03" y2="235.5" stroke="#efefef" stroke-width="0.52"/>
<line x1="151.26" y1="220.2" x2="151.26" y2="235.5" stroke="#efefef" stroke-width="0.52"/>
<line x1="157.49" y1="220.2" x2="157.49" y2="235.5" stroke="#efefef" stroke-width="0.52"/>
<line x1="163.72" y1="220.2" x2="163.72" y2="235.5" stroke="#e4e4e4" stroke-width="0.52"/>
<line x1="169.95" y1="220.2" x2="169.95" y2="235.5" stroke="#efefef" stroke-width="0.52"/>
<line x1="176.18" y1="220.2" x2="176.18" y2="235.5" stroke="#efefef" stroke-width="0.52"/>
<line x1="182.41" y1="220.2" x2="182.41" y2="235.5" stroke="#efefef" stroke-width="0.52"/>
<line x1="188.64" y1="220.2" x2="188.64" y2="235.5" stroke="#e4e4e4" stroke-width="0.52"/>
<line x1="194.88" y1="220.2" x2="194.88" y2="235.5" stroke="#efefef" stroke-width="0.52"/>
<line x1="201.11" y1="220.2" x2="201.11" y2="235.5" stroke="#efefef" stroke-width="0.52"/>
<line x1="207.34" y1="220.2" x2="207.34" y2="235.5" stroke="#efefef" stroke-width="0.52"/>
<line x1="213.57" y1="220.2" x2="213.57" y2="235.5" stroke="#e4e4e4" stroke-width="0.52"/>
<line x1="219.8" y1="220.2" x2="219.8" y2="235.5" stroke="#efefef" stroke-width="0.52"/>
<line x1="226.03" y1="220.2" x2="226.03" y2="235.5" stroke="#efefef" stroke-width="0.52"/>
<line x1="232.26" y1="220.2" x2="232.26" y2="235.5" stroke="#efefef" stroke-width="0.52"/>
<line x1="238.49" y1="220.2" x2="238.49" y2="235.5" stroke="#e4e4e4" stroke-width="0.52"/>
<line x1="244.72" y1="220.2" x2="244.72" y2="235.5" stroke="#efefef" stroke-width="0.52"/>
<line x1="250.95" y1="220.2" x2="250.95" y2="235.5" stroke="#efefef" stroke-width="0.52"/>
<line x1="257.19" y1="220.2" x2="257.19" y2="235.5" stroke="#efefef" stroke-width="0.52"/>
<line x1="263.42" y1="220.2" x2="263.42" y2="235.5" stroke="#e4e4e4" stroke-width="0.52"/>
<line x1="269.65" y1="220.2" x2="269.65" y2="235.5" stroke="#efefef" stroke-width="0.52"/>
<line x1="275.88" y1="220.2" x2="275.88" y2="235.5" stroke="#efefef" stroke-width="0.52"/>
<line x1="282.11" y1="220.2" x2="282.11" y2="235.5" stroke="#efefef" stroke-width="0.52"/>
<line x1="288.34" y1="220.2" x2="288.34" y2="235.5" stroke="#e4e4e4" stroke-width="0.52"/>
<line x1="294.57" y1="220.2" x2="294.57" y2="235.5" stroke="#efefef" stroke-width="0.52"/>
<line x1="300.8" y1="220.2" x2="300.8" y2="235.5" stroke="#efefef" stroke-width="0.52"/>
<line x1="307.03" y1="220.2" x2="307.03" y2="235.5" stroke="#efefef" stroke-width="0.52"/>
<line x1="313.26" y1="220.2" x2="313.26" y2="235.5" stroke="#e4e4e4" stroke-width="0.52"/>
<line x1="319.5" y1="220.2" x2="319.5" y2="235.5" stroke="#efefef" stroke-width="0.52"/>
<line x1="325.73" y1="220.2" x2="325.73" y2="235.5" stroke="#efefef" stroke-width="0.52"/>
<line x1="331.96" y1="220.2" x2="331.96" y2="235.5" stroke="#efefef" stroke-width="0.52"/>
<line x1="338.19" y1="220.2" x2="338.19" y2="235.5" stroke="#e4e4e4" stroke-width="0.52"/>
<line x1="344.42" y1="220.2" x2="344.42" y2="235.5" stroke="#efefef" stroke-width="0.52"/>
<line x1="350.65" y1="220.2" x2="350.65" y2="235.5" stroke="#efefef" stroke-width="0.52"/>
<line x1="356.88" y1="220.2" x2="356.88" y2="235.5" stroke="#efefef" stroke-width="0.52"/>
<line x1="363.11" y1="220.2" x2="363.11" y2="235.5" stroke="#e4e4e4" stroke-width="0.52"/>
<line x1="369.34" y1="220.2" x2="369.34" y2="235.5" stroke="#efefef" stroke-width="0.52"/>
<line x1="375.57" y1="220.2" x2="375.57" y2="235.5" stroke="#efefef" stroke-width="0.52"/>
<line x1="381.81" y1="220.2" x2="381.81" y2="235.5" stroke="#efefef" stroke-width="0.52"/>
<line x1="388.04" y1="220.2" x2="388.04" y2="235.5" stroke="#e4e4e4" stroke-width="0.52"/>
<line x1="394.27" y1="220.2" x2="394.27" y2="235.5" stroke="#efefef" stroke-width="0.52"/>
<line x1="400.5" y1="220.2" x2="400.5" y2="235.5" stroke="#efefef" stroke-width="0.52"/>
<line x1="406.73" y1="220.2" x2="406.73" y2="235.5" stroke="#efefef" stroke-width="0.52"/>
<line x1="412.96" y1="220.2" x2="412.96" y2="235.5" stroke="#e4e4e4" stroke-width="0.52"/>
<line x1="419.19" y1="220.2" x2="419.19" y2="235.5" stroke="#efefef" stroke-width="0.52"/>
<line x1="425.42" y1="220.2" x2="425.42" y2="235.5" stroke="#efefef" stroke-width="0.52"/>
<line x1="431.65" y1="220.2" x2="431.65" y2="235.5" stroke="#efefef" stroke-width="0.52"/>
<line x1="437.88" y1="220.2" x2="437.88" y2="235.5" stroke="#e4e4e4" stroke-width="0.52"/>
<line x1="444.12" y1="220.2" x2="444.12" y2="235.5" stroke="#efefef" stroke-width="0.52"/>
<line x1="450.35" y1="220.2" x2="450.35" y2="235.5" stroke="#efefef" stroke-width="0.52"/>
<line x1="38.6" y1="226.43" x2="451.9" y2="226.43" stroke="#eeeeee" stroke-width="0.52"/>
<line x1="38.6" y1="232.66" x2="451.9" y2="232.66" stroke="#eeeeee" stroke-width="0.52"/>
<rect x="26.1" y="220.4" width="5.2" height="14.9" fill="#fff"/>
<line x1="28.1" y1="226.43" x2="29.3" y2="226.43" stroke="#8a8a8a" stroke-width="0.6"/>
<line x1="28.1" y1="232.66" x2="29.3" y2="232.66" stroke="#8a8a8a" stroke-width="0.6"/>
<rect x="38.6" y="209.8" width="413.3" height="10.4" fill="#f3f3f3"/>
<line x1="38.6" y1="209.7" x2="451.9" y2="209.7" stroke="#d2d2d2" stroke-width="0.55"/>
<line x1="38.6" y1="220" x2="451.9" y2="220" stroke="#d2d2d2" stroke-width="0.55"/>
<path d="M41.9 213.5 h4.2 l-2.1 3 z" fill="#444"/>
<g transform="translate(49.1 211)">
<rect x="0.6" y="1" width="5.8" height="6.7" fill="#dfe9f7" stroke="#4d7fc4" stroke-width="0.6" rx="0.6"/>
<rect x="1.9" y="0.1" width="3.2" height="1.6" fill="#4d7fc4" rx="0.4"/>
<rect x="1" y="4.6" width="5" height="2.4" fill="#58a838"/>
</g>
<text x="58.9" y="217.58" font-size="6.4" fill="#6c6c6c" textLength="81.5" lengthAdjust="spacingAndGlyphs">PageFooter [one band per page]</text>
<line x1="26.4" y1="214.35" x2="31" y2="214.35" stroke="#a2a2a2" stroke-width="0.7"/>
<line x1="26.4" y1="215.85" x2="31" y2="215.85" stroke="#a2a2a2" stroke-width="0.7"/>
<line x1="45.33" y1="235.5" x2="45.33" y2="285.6" stroke="#efefef" stroke-width="0.52"/>
<line x1="51.56" y1="235.5" x2="51.56" y2="285.6" stroke="#efefef" stroke-width="0.52"/>
<line x1="57.79" y1="235.5" x2="57.79" y2="285.6" stroke="#efefef" stroke-width="0.52"/>
<line x1="64.02" y1="235.5" x2="64.02" y2="285.6" stroke="#e4e4e4" stroke-width="0.52"/>
<line x1="70.25" y1="235.5" x2="70.25" y2="285.6" stroke="#efefef" stroke-width="0.52"/>
<line x1="76.49" y1="235.5" x2="76.49" y2="285.6" stroke="#efefef" stroke-width="0.52"/>
<line x1="82.72" y1="235.5" x2="82.72" y2="285.6" stroke="#efefef" stroke-width="0.52"/>
<line x1="88.95" y1="235.5" x2="88.95" y2="285.6" stroke="#e4e4e4" stroke-width="0.52"/>
<line x1="95.18" y1="235.5" x2="95.18" y2="285.6" stroke="#efefef" stroke-width="0.52"/>
<line x1="101.41" y1="235.5" x2="101.41" y2="285.6" stroke="#efefef" stroke-width="0.52"/>
<line x1="107.64" y1="235.5" x2="107.64" y2="285.6" stroke="#efefef" stroke-width="0.52"/>
<line x1="113.87" y1="235.5" x2="113.87" y2="285.6" stroke="#e4e4e4" stroke-width="0.52"/>
<line x1="120.1" y1="235.5" x2="120.1" y2="285.6" stroke="#efefef" stroke-width="0.52"/>
<line x1="126.33" y1="235.5" x2="126.33" y2="285.6" stroke="#efefef" stroke-width="0.52"/>
<line x1="132.56" y1="235.5" x2="132.56" y2="285.6" stroke="#efefef" stroke-width="0.52"/>
<line x1="138.8" y1="235.5" x2="138.8" y2="285.6" stroke="#e4e4e4" stroke-width="0.52"/>
<line x1="145.03" y1="235.5" x2="145.03" y2="285.6" stroke="#efefef" stroke-width="0.52"/>
<line x1="151.26" y1="235.5" x2="151.26" y2="285.6" stroke="#efefef" stroke-width="0.52"/>
<line x1="157.49" y1="235.5" x2="157.49" y2="285.6" stroke="#efefef" stroke-width="0.52"/>
<line x1="163.72" y1="235.5" x2="163.72" y2="285.6" stroke="#e4e4e4" stroke-width="0.52"/>
<line x1="169.95" y1="235.5" x2="169.95" y2="285.6" stroke="#efefef" stroke-width="0.52"/>
<line x1="176.18" y1="235.5" x2="176.18" y2="285.6" stroke="#efefef" stroke-width="0.52"/>
<line x1="182.41" y1="235.5" x2="182.41" y2="285.6" stroke="#efefef" stroke-width="0.52"/>
<line x1="188.64" y1="235.5" x2="188.64" y2="285.6" stroke="#e4e4e4" stroke-width="0.52"/>
<line x1="194.88" y1="235.5" x2="194.88" y2="285.6" stroke="#efefef" stroke-width="0.52"/>
<line x1="201.11" y1="235.5" x2="201.11" y2="285.6" stroke="#efefef" stroke-width="0.52"/>
<line x1="207.34" y1="235.5" x2="207.34" y2="285.6" stroke="#efefef" stroke-width="0.52"/>
<line x1="213.57" y1="235.5" x2="213.57" y2="285.6" stroke="#e4e4e4" stroke-width="0.52"/>
<line x1="219.8" y1="235.5" x2="219.8" y2="285.6" stroke="#efefef" stroke-width="0.52"/>
<line x1="226.03" y1="235.5" x2="226.03" y2="285.6" stroke="#efefef" stroke-width="0.52"/>
<line x1="232.26" y1="235.5" x2="232.26" y2="285.6" stroke="#efefef" stroke-width="0.52"/>
<line x1="238.49" y1="235.5" x2="238.49" y2="285.6" stroke="#e4e4e4" stroke-width="0.52"/>
<line x1="244.72" y1="235.5" x2="244.72" y2="285.6" stroke="#efefef" stroke-width="0.52"/>
<line x1="250.95" y1="235.5" x2="250.95" y2="285.6" stroke="#efefef" stroke-width="0.52"/>
<line x1="257.19" y1="235.5" x2="257.19" y2="285.6" stroke="#efefef" stroke-width="0.52"/>
<line x1="263.42" y1="235.5" x2="263.42" y2="285.6" stroke="#e4e4e4" stroke-width="0.52"/>
<line x1="269.65" y1="235.5" x2="269.65" y2="285.6" stroke="#efefef" stroke-width="0.52"/>
<line x1="275.88" y1="235.5" x2="275.88" y2="285.6" stroke="#efefef" stroke-width="0.52"/>
<line x1="282.11" y1="235.5" x2="282.11" y2="285.6" stroke="#efefef" stroke-width="0.52"/>
<line x1="288.34" y1="235.5" x2="288.34" y2="285.6" stroke="#e4e4e4" stroke-width="0.52"/>
<line x1="294.57" y1="235.5" x2="294.57" y2="285.6" stroke="#efefef" stroke-width="0.52"/>
<line x1="300.8" y1="235.5" x2="300.8" y2="285.6" stroke="#efefef" stroke-width="0.52"/>
<line x1="307.03" y1="235.5" x2="307.03" y2="285.6" stroke="#efefef" stroke-width="0.52"/>
<line x1="313.26" y1="235.5" x2="313.26" y2="285.6" stroke="#e4e4e4" stroke-width="0.52"/>
<line x1="319.5" y1="235.5" x2="319.5" y2="285.6" stroke="#efefef" stroke-width="0.52"/>
<line x1="325.73" y1="235.5" x2="325.73" y2="285.6" stroke="#efefef" stroke-width="0.52"/>
<line x1="331.96" y1="235.5" x2="331.96" y2="285.6" stroke="#efefef" stroke-width="0.52"/>
<line x1="338.19" y1="235.5" x2="338.19" y2="285.6" stroke="#e4e4e4" stroke-width="0.52"/>
<line x1="344.42" y1="235.5" x2="344.42" y2="285.6" stroke="#efefef" stroke-width="0.52"/>
<line x1="350.65" y1="235.5" x2="350.65" y2="285.6" stroke="#efefef" stroke-width="0.52"/>
<line x1="356.88" y1="235.5" x2="356.88" y2="285.6" stroke="#efefef" stroke-width="0.52"/>
<line x1="363.11" y1="235.5" x2="363.11" y2="285.6" stroke="#e4e4e4" stroke-width="0.52"/>
<line x1="369.34" y1="235.5" x2="369.34" y2="285.6" stroke="#efefef" stroke-width="0.52"/>
<line x1="375.57" y1="235.5" x2="375.57" y2="285.6" stroke="#efefef" stroke-width="0.52"/>
<line x1="381.81" y1="235.5" x2="381.81" y2="285.6" stroke="#efefef" stroke-width="0.52"/>
<line x1="388.04" y1="235.5" x2="388.04" y2="285.6" stroke="#e4e4e4" stroke-width="0.52"/>
<line x1="394.27" y1="235.5" x2="394.27" y2="285.6" stroke="#efefef" stroke-width="0.52"/>
<line x1="400.5" y1="235.5" x2="400.5" y2="285.6" stroke="#efefef" stroke-width="0.52"/>
<line x1="406.73" y1="235.5" x2="406.73" y2="285.6" stroke="#efefef" stroke-width="0.52"/>
<line x1="412.96" y1="235.5" x2="412.96" y2="285.6" stroke="#e4e4e4" stroke-width="0.52"/>
<line x1="419.19" y1="235.5" x2="419.19" y2="285.6" stroke="#efefef" stroke-width="0.52"/>
<line x1="425.42" y1="235.5" x2="425.42" y2="285.6" stroke="#efefef" stroke-width="0.52"/>
<line x1="431.65" y1="235.5" x2="431.65" y2="285.6" stroke="#efefef" stroke-width="0.52"/>
<line x1="437.88" y1="235.5" x2="437.88" y2="285.6" stroke="#e4e4e4" stroke-width="0.52"/>
<line x1="444.12" y1="235.5" x2="444.12" y2="285.6" stroke="#efefef" stroke-width="0.52"/>
<line x1="450.35" y1="235.5" x2="450.35" y2="285.6" stroke="#efefef" stroke-width="0.52"/>
<line x1="38.6" y1="241.73" x2="451.9" y2="241.73" stroke="#eeeeee" stroke-width="0.52"/>
<line x1="38.6" y1="247.96" x2="451.9" y2="247.96" stroke="#eeeeee" stroke-width="0.52"/>
<line x1="38.6" y1="254.19" x2="451.9" y2="254.19" stroke="#eeeeee" stroke-width="0.52"/>
<line x1="38.6" y1="260.42" x2="451.9" y2="260.42" stroke="#e4e4e4" stroke-width="0.52"/>
<line x1="38.6" y1="266.65" x2="451.9" y2="266.65" stroke="#eeeeee" stroke-width="0.52"/>
<line x1="38.6" y1="272.89" x2="451.9" y2="272.89" stroke="#eeeeee" stroke-width="0.52"/>
<line x1="38.6" y1="279.12" x2="451.9" y2="279.12" stroke="#eeeeee" stroke-width="0.52"/>
<line x1="28.1" y1="241.73" x2="29.3" y2="241.73" stroke="#8a8a8a" stroke-width="0.6"/>
<line x1="28.1" y1="247.96" x2="29.3" y2="247.96" stroke="#8a8a8a" stroke-width="0.6"/>
<line x1="28.1" y1="254.19" x2="29.3" y2="254.19" stroke="#8a8a8a" stroke-width="0.6"/>
<line x1="27.3" y1="260.42" x2="30.1" y2="260.42" stroke="#6a6a6a" stroke-width="0.7"/>
<line x1="28.1" y1="266.65" x2="29.3" y2="266.65" stroke="#8a8a8a" stroke-width="0.6"/>
<line x1="28.1" y1="272.89" x2="29.3" y2="272.89" stroke="#8a8a8a" stroke-width="0.6"/>
<line x1="28.1" y1="279.12" x2="29.3" y2="279.12" stroke="#8a8a8a" stroke-width="0.6"/>
<rect x="27.8" y="120.7" width="0.5" height="1.8" fill="#e0a060" opacity="0.7"/>
<rect x="28.3" y="120.7" width="0.6" height="1.8" fill="#555"/>
<rect x="28.9" y="120.7" width="0.5" height="1.8" fill="#6a9adf" opacity="0.6"/>
<rect x="27.8" y="207.4" width="0.5" height="1.8" fill="#e0a060" opacity="0.7"/>
<rect x="28.3" y="207.4" width="0.6" height="1.8" fill="#555"/>
<rect x="28.9" y="207.4" width="0.5" height="1.8" fill="#6a9adf" opacity="0.6"/>
<rect x="27.8" y="283" width="0.5" height="1.8" fill="#e0a060" opacity="0.7"/>
<rect x="28.3" y="283" width="0.6" height="1.8" fill="#555"/>
<rect x="28.9" y="283" width="0.5" height="1.8" fill="#6a9adf" opacity="0.6"/>
<line x1="88.95" y1="72.6" x2="88.95" y2="123.5" stroke="#6e6e6e" stroke-width="0.62" stroke-dasharray="0.56 0.48"/>
<line x1="401.55" y1="72.6" x2="401.55" y2="123.5" stroke="#6e6e6e" stroke-width="0.62" stroke-dasharray="0.56 0.48"/>
<line x1="88.95" y1="133.7" x2="88.95" y2="149.5" stroke="#6e6e6e" stroke-width="0.62" stroke-dasharray="0.56 0.48"/>
<line x1="401.55" y1="133.7" x2="401.55" y2="149.5" stroke="#6e6e6e" stroke-width="0.62" stroke-dasharray="0.56 0.48"/>
<line x1="88.95" y1="159.7" x2="88.95" y2="210" stroke="#6e6e6e" stroke-width="0.62" stroke-dasharray="0.56 0.48"/>
<line x1="401.55" y1="159.7" x2="401.55" y2="210" stroke="#6e6e6e" stroke-width="0.62" stroke-dasharray="0.56 0.48"/>
<line x1="88.95" y1="220.2" x2="88.95" y2="285.6" stroke="#6e6e6e" stroke-width="0.62" stroke-dasharray="0.56 0.48"/>
<line x1="401.55" y1="220.2" x2="401.55" y2="285.6" stroke="#6e6e6e" stroke-width="0.62" stroke-dasharray="0.56 0.48"/>
<line x1="38.6" y1="235.5" x2="451.9" y2="235.5" stroke="#6e6e6e" stroke-width="0.62" stroke-dasharray="0.56 0.48"/>
<rect x="38.6" y="72.6" width="413.3" height="213" fill="none" stroke="#d6d6d6" stroke-width="0.6"/>
<rect x="19" y="378.1" width="591.7" height="13.9" fill="#0072c6"/>
<g transform="translate(23.3 381.2) scale(0.9)">
<defs><linearGradient id="gxrb" x1="0" y1="0" x2="0" y2="1"><stop offset="0" stop-color="#ffd83a"/><stop offset="1" stop-color="#ee8a1a"/></linearGradient></defs>
<path d="M0.6 7.4 L4.2 3.6 L5.2 5.2 L8 0.2 V7.4 Z" fill="url(#gxrb)"/>
<path d="M0.6 7.4 H8 V6.4 H1.6 Z" fill="#d9701a"/>
<line x1="1.6" y1="1.2" x2="4.8" y2="6.4" stroke="#2c58b6" stroke-width="1.3"/>
<path d="M4.2 6.6 L5.4 6.0 L5.4 7.8 Z" fill="#222"/>
</g>
<text x="32.9" y="387.41" font-size="6.2" fill="#fff" textLength="23.6" lengthAdjust="spacingAndGlyphs">Designer</text>
<line x1="60.9" y1="380.6" x2="60.9" y2="389.6" stroke="#6aaade" stroke-width="0.6"/>
<rect x="66.6" y="381.2" width="5.6" height="7.4" fill="#e9eef5" stroke="#c9d6e8" stroke-width="0.4"/>
<path d="M66 381 L69 384.6 L66.4 388.4 L68 388.4 L70 385.6 L72 388.4 L73.4 388.4 L70.8 384.6 L73.2 381 L71.8 381 L70 383.6 L67.8 381 Z" fill="#e8912d" opacity="0.9"/>
<rect x="70.4" y="382" width="2.4" height="5" fill="#2b4c8c" opacity="0.8"/>
<text x="76" y="387.41" font-size="6.2" fill="#fff" textLength="17.7" lengthAdjust="spacingAndGlyphs">Scripts</text>
<line x1="98.6" y1="380.6" x2="98.6" y2="389.6" stroke="#6aaade" stroke-width="0.6"/>
<text x="104.7" y="387.31" font-size="5.9" fill="#fff" textLength="114.3" lengthAdjust="spacingAndGlyphs">XtraReportUserDesigned ( PaperKind: A4 )</text>
<line x1="510.9" y1="380" x2="510.9" y2="390" stroke="#8cc0ea" stroke-width="0.7"/>
<text x="516" y="387.21" font-size="5.9" fill="#fff" textLength="15" lengthAdjust="spacingAndGlyphs">100%</text>
<line x1="537.6" y1="385.1" x2="540.6" y2="385.1" stroke="#f2f8fd" stroke-width="0.8"/>
<line x1="544.6" y1="385.1" x2="597.4" y2="385.1" stroke="#d4e8f8" stroke-width="0.6"/>
<rect x="570" y="382.9" width="1.4" height="4.4" fill="#f2f8fd"/>
<line x1="601.5" y1="385.1" x2="604.7" y2="385.1" stroke="#f2f8fd" stroke-width="0.8"/>
<line x1="603.1" y1="383.5" x2="603.1" y2="386.7" stroke="#f2f8fd" stroke-width="0.8"/>
<rect x="612" y="54.8" width="127.2" height="335.8" fill="#fff" stroke="#c9c9c9" stroke-width="0.8"/>
<text x="618.8" y="65.88" font-size="7.6" fill="#1a1a1a" textLength="42.2" lengthAdjust="spacingAndGlyphs">Property Grid</text>
<rect x="719.6" y="61.3" width="1.7" height="2.2" fill="#444"/>
<rect x="718.8" y="63.4" width="3.2" height="0.6" fill="#444"/>
<rect x="720.15" y="64.05" width="0.5" height="1.3" fill="#444"/>
<line x1="728.3" y1="61.3" x2="732.3" y2="65.3" stroke="#3a3a3a" stroke-width="0.85"/>
<line x1="728.3" y1="65.3" x2="732.3" y2="61.3" stroke="#3a3a3a" stroke-width="0.85"/>
<rect x="613.3" y="73.8" width="125.1" height="9.6" fill="#fff" stroke="#bdbdbd" stroke-width="0.6"/>
<rect x="729.3" y="74.1" width="8.8" height="9" fill="#f0f0f0" stroke="#cfcfcf" stroke-width="0.5"/>
<text x="614.9" y="80.58" font-size="6.7" fill="#1c1c1c" textLength="73.1" lengthAdjust="spacingAndGlyphs" font-weight="bold">XtraReportUserDesigned</text>
<text x="693.2" y="80.58" font-size="6.7" fill="#1c1c1c" textLength="19.8" lengthAdjust="spacingAndGlyphs" font-weight="bold">Report</text>
<path d="M732.1 77.85 L733.7 79.75 L735.3 77.85" fill="none" stroke="#444" stroke-width="0.85"/>
<rect x="614.4" y="85.3" width="12.9" height="11.7" fill="#aed4f2"/>
<rect x="616.6" y="88.1" width="2.9" height="2.9" fill="#f4f8fd" stroke="#2f4f8f" stroke-width="0.55"/>
<line x1="617.2" y1="89.55" x2="618.9" y2="89.55" stroke="#1f3566" stroke-width="0.55"/>
<line x1="618.05" y1="88.7" x2="618.05" y2="90.4" stroke="#1f3566" stroke-width="0.55"/>
<line x1="620.6" y1="88.7" x2="625" y2="88.7" stroke="#5577b0" stroke-width="0.6"/>
<line x1="620.6" y1="90.3" x2="625" y2="90.3" stroke="#5577b0" stroke-width="0.6"/>
<rect x="616.6" y="92.1" width="2.9" height="2.9" fill="#f4f8fd" stroke="#2f4f8f" stroke-width="0.55"/>
<line x1="617.2" y1="93.55" x2="618.9" y2="93.55" stroke="#1f3566" stroke-width="0.55"/>
<line x1="618.05" y1="92.7" x2="618.05" y2="94.4" stroke="#1f3566" stroke-width="0.55"/>
<line x1="620.6" y1="92.7" x2="625" y2="92.7" stroke="#5577b0" stroke-width="0.6"/>
<line x1="620.6" y1="94.3" x2="625" y2="94.3" stroke="#5577b0" stroke-width="0.6"/>
<text x="630.2" y="90.87" font-size="5.8" fill="#2a5fc0" font-weight="bold">A</text>
<text x="630.4" y="95.57" font-size="5.8" fill="#b0202a" font-weight="bold">Z</text>
<line x1="636.6" y1="87" x2="636.6" y2="95" stroke="#111" stroke-width="0.8"/>
<path d="M635.0 93.2 L636.6 95.8 L638.2 93.2 Z" fill="#111"/>
<clipPath id="cg"><rect x="613.5" y="98.9" width="124.3" height="219.6"/></clipPath>
<clipPath id="cn"><rect x="621.9" y="98.9" width="49" height="219.6"/></clipPath>
<clipPath id="cv"><rect x="671.4" y="98.9" width="56.2" height="219.6"/></clipPath>
<rect x="613.5" y="98.9" width="124.3" height="219.6" fill="#fff"/>
<g clip-path="url(#cg)">
<text x="623.8" y="106.01" font-size="6.5" fill="#1470c4" textLength="35.2" lengthAdjust="spacingAndGlyphs" font-weight="bold">Appearance</text>
<path d="M720.8 104.7 l1.5 -1.8 l1.5 1.8 z" fill="#3c3c3c"/>
<line x1="621.9" y1="108.5" x2="728.6" y2="108.5" stroke="#d6d6d6" stroke-width="0.5"/>
<text x="630.9" y="115.59" font-size="5.7" fill="#1e1e1e" textLength="45.17" lengthAdjust="spacingAndGlyphs" clip-path="url(#cn)">Background Color</text>
<rect x="674.2" y="111.55" width="11.2" height="4.2" fill="#fff" stroke="#222" stroke-width="0.5"/>
<text x="687.8" y="115.59" font-size="5.7" fill="#1e1e1e" textLength="30.21" lengthAdjust="spacingAndGlyphs" clip-path="url(#cv)">Transparent</text>
<line x1="621.9" y1="118.6" x2="728.6" y2="118.6" stroke="#d6d6d6" stroke-width="0.5"/>
<line x1="671.4" y1="108.5" x2="671.4" y2="118.6" stroke="#d6d6d6" stroke-width="0.5"/>
<line x1="621.9" y1="108.5" x2="621.9" y2="118.6" stroke="#d6d6d6" stroke-width="0.5"/>
<text x="630.9" y="125.54" font-size="5.7" fill="#1e1e1e" textLength="31.99" lengthAdjust="spacingAndGlyphs" clip-path="url(#cn)">Border Color</text>
<rect x="674.2" y="121.5" width="11.2" height="4.2" fill="#000" stroke="#222" stroke-width="0.5"/>
<text x="687.8" y="125.54" font-size="5.7" fill="#1e1e1e" textLength="13.8" lengthAdjust="spacingAndGlyphs" clip-path="url(#cv)">Black</text>
<line x1="621.9" y1="128.4" x2="728.6" y2="128.4" stroke="#d6d6d6" stroke-width="0.5"/>
<line x1="671.4" y1="118.6" x2="671.4" y2="128.4" stroke="#d6d6d6" stroke-width="0.5"/>
<line x1="621.9" y1="118.6" x2="621.9" y2="128.4" stroke="#d6d6d6" stroke-width="0.5"/>
<text x="630.9" y="135.34" font-size="5.7" fill="#1e1e1e" textLength="45.79" lengthAdjust="spacingAndGlyphs" clip-path="url(#cn)">Border Dash Style</text>
<text x="673.2" y="135.34" font-size="5.7" fill="#1e1e1e" textLength="12.55" lengthAdjust="spacingAndGlyphs" clip-path="url(#cv)">Solid</text>
<line x1="621.9" y1="138.2" x2="728.6" y2="138.2" stroke="#d6d6d6" stroke-width="0.5"/>
<line x1="671.4" y1="128.4" x2="671.4" y2="138.2" stroke="#d6d6d6" stroke-width="0.5"/>
<line x1="621.9" y1="128.4" x2="621.9" y2="138.2" stroke="#d6d6d6" stroke-width="0.5"/>
<text x="630.9" y="144.84" font-size="5.7" fill="#1e1e1e" textLength="32.93" lengthAdjust="spacingAndGlyphs" clip-path="url(#cn)">Border Width</text>
<text x="673.2" y="144.84" font-size="5.7" fill="#1e1e1e" clip-path="url(#cv)">1</text>
<line x1="621.9" y1="147.4" x2="728.6" y2="147.4" stroke="#d6d6d6" stroke-width="0.5"/>
<line x1="671.4" y1="138.2" x2="671.4" y2="147.4" stroke="#d6d6d6" stroke-width="0.5"/>
<line x1="621.9" y1="138.2" x2="621.9" y2="147.4" stroke="#d6d6d6" stroke-width="0.5"/>
<text x="630.9" y="153.99" font-size="5.7" fill="#1e1e1e" textLength="19.76" lengthAdjust="spacingAndGlyphs" clip-path="url(#cn)">Borders</text>
<text x="673.2" y="153.99" font-size="5.7" fill="#1e1e1e" textLength="13.49" lengthAdjust="spacingAndGlyphs" clip-path="url(#cv)">None</text>
<line x1="621.9" y1="156.5" x2="728.6" y2="156.5" stroke="#d6d6d6" stroke-width="0.5"/>
<line x1="671.4" y1="147.4" x2="671.4" y2="156.5" stroke="#d6d6d6" stroke-width="0.5"/>
<line x1="621.9" y1="147.4" x2="621.9" y2="156.5" stroke="#d6d6d6" stroke-width="0.5"/>
<text x="630.9" y="163.49" font-size="5.7" fill="#1e1e1e" textLength="11.29" lengthAdjust="spacingAndGlyphs" clip-path="url(#cn)">Font</text>
<text x="673.2" y="163.49" font-size="5.7" fill="#1e1e1e" textLength="54.04" lengthAdjust="spacingAndGlyphs" clip-path="url(#cv)">Times New Roman;...</text>
<path d="M625.25 159.85 L627.12 161.55 L625.25 163.25 Z" fill="#3c3c3c"/>
<line x1="621.9" y1="166.4" x2="728.6" y2="166.4" stroke="#d6d6d6" stroke-width="0.5"/>
<line x1="671.4" y1="156.5" x2="671.4" y2="166.4" stroke="#d6d6d6" stroke-width="0.5"/>
<line x1="621.9" y1="156.5" x2="621.9" y2="166.4" stroke="#d6d6d6" stroke-width="0.5"/>
<text x="630.9" y="173.34" font-size="5.7" fill="#1e1e1e" textLength="44.22" lengthAdjust="spacingAndGlyphs" clip-path="url(#cn)">Foreground Color</text>
<rect x="674.2" y="169.3" width="11.2" height="4.2" fill="#000" stroke="#222" stroke-width="0.5"/>
<text x="687.8" y="173.34" font-size="5.7" fill="#1e1e1e" textLength="13.8" lengthAdjust="spacingAndGlyphs" clip-path="url(#cv)">Black</text>
<line x1="621.9" y1="176.2" x2="728.6" y2="176.2" stroke="#d6d6d6" stroke-width="0.5"/>
<line x1="671.4" y1="166.4" x2="671.4" y2="176.2" stroke="#d6d6d6" stroke-width="0.5"/>
<line x1="621.9" y1="166.4" x2="621.9" y2="176.2" stroke="#d6d6d6" stroke-width="0.5"/>
<text x="630.9" y="183.14" font-size="5.7" fill="#1e1e1e" textLength="56.45" lengthAdjust="spacingAndGlyphs" clip-path="url(#cn)">Formatting Rule Sheet</text>
<text x="673.2" y="183.14" font-size="5.7" fill="#1e1e1e" textLength="28.54" lengthAdjust="spacingAndGlyphs" clip-path="url(#cv)">(Collection)</text>
<line x1="621.9" y1="186" x2="728.6" y2="186" stroke="#d6d6d6" stroke-width="0.5"/>
<line x1="671.4" y1="176.2" x2="671.4" y2="186" stroke="#d6d6d6" stroke-width="0.5"/>
<line x1="621.9" y1="176.2" x2="621.9" y2="186" stroke="#d6d6d6" stroke-width="0.5"/>
<text x="630.9" y="192.94" font-size="5.7" fill="#1e1e1e" textLength="42.96" lengthAdjust="spacingAndGlyphs" clip-path="url(#cn)">Formatting Rules</text>
<text x="673.2" y="192.94" font-size="5.7" fill="#1e1e1e" textLength="28.54" lengthAdjust="spacingAndGlyphs" clip-path="url(#cv)">(Collection)</text>
<line x1="621.9" y1="195.8" x2="728.6" y2="195.8" stroke="#d6d6d6" stroke-width="0.5"/>
<line x1="671.4" y1="186" x2="671.4" y2="195.8" stroke="#d6d6d6" stroke-width="0.5"/>
<line x1="621.9" y1="186" x2="621.9" y2="195.8" stroke="#d6d6d6" stroke-width="0.5"/>
<text x="630.9" y="202.76" font-size="5.7" fill="#1e1e1e" textLength="20.71" lengthAdjust="spacingAndGlyphs" clip-path="url(#cn)">Padding</text>
<text x="673.2" y="202.76" font-size="5.7" fill="#1e1e1e" textLength="21.96" lengthAdjust="spacingAndGlyphs" clip-path="url(#cv)">0; 0; 0; 0</text>
<path d="M625.25 199.13 L627.12 200.83 L625.25 202.53 Z" fill="#3c3c3c"/>
<line x1="621.9" y1="205.65" x2="728.6" y2="205.65" stroke="#d6d6d6" stroke-width="0.5"/>
<line x1="671.4" y1="195.8" x2="671.4" y2="205.65" stroke="#d6d6d6" stroke-width="0.5"/>
<line x1="621.9" y1="195.8" x2="621.9" y2="205.65" stroke="#d6d6d6" stroke-width="0.5"/>
<text x="630.9" y="212.46" font-size="5.7" fill="#1e1e1e" textLength="28.23" lengthAdjust="spacingAndGlyphs" clip-path="url(#cn)">Page Color</text>
<rect x="674.2" y="208.43" width="11.2" height="4.2" fill="#fff" stroke="#222" stroke-width="0.5"/>
<text x="687.8" y="212.46" font-size="5.7" fill="#1e1e1e" textLength="14.42" lengthAdjust="spacingAndGlyphs" clip-path="url(#cv)">White</text>
<line x1="621.9" y1="215.2" x2="728.6" y2="215.2" stroke="#d6d6d6" stroke-width="0.5"/>
<line x1="671.4" y1="205.65" x2="671.4" y2="215.2" stroke="#d6d6d6" stroke-width="0.5"/>
<line x1="621.9" y1="205.65" x2="621.9" y2="215.2" stroke="#d6d6d6" stroke-width="0.5"/>
<text x="630.9" y="222.09" font-size="5.7" fill="#1e1e1e" textLength="28.86" lengthAdjust="spacingAndGlyphs" clip-path="url(#cn)">Style Sheet</text>
<text x="673.2" y="222.09" font-size="5.7" fill="#1e1e1e" textLength="28.54" lengthAdjust="spacingAndGlyphs" clip-path="url(#cv)">(Collection)</text>
<line x1="621.9" y1="224.9" x2="728.6" y2="224.9" stroke="#d6d6d6" stroke-width="0.5"/>
<line x1="671.4" y1="215.2" x2="671.4" y2="224.9" stroke="#d6d6d6" stroke-width="0.5"/>
<line x1="621.9" y1="215.2" x2="621.9" y2="224.9" stroke="#d6d6d6" stroke-width="0.5"/>
<text x="630.9" y="231.84" font-size="5.7" fill="#1e1e1e" textLength="45.93" lengthAdjust="spacingAndGlyphs" clip-path="url(#cn)">Style Sheet&#x27;s Path</text>
<line x1="621.9" y1="234.7" x2="728.6" y2="234.7" stroke="#d6d6d6" stroke-width="0.5"/>
<line x1="671.4" y1="224.9" x2="671.4" y2="234.7" stroke="#d6d6d6" stroke-width="0.5"/>
<line x1="621.9" y1="224.9" x2="621.9" y2="234.7" stroke="#d6d6d6" stroke-width="0.5"/>
<text x="630.9" y="241.64" font-size="5.7" fill="#1e1e1e" textLength="36.7" lengthAdjust="spacingAndGlyphs" clip-path="url(#cn)">Text Alignment</text>
<text x="673.2" y="241.64" font-size="5.7" fill="#1e1e1e" textLength="20.08" lengthAdjust="spacingAndGlyphs" clip-path="url(#cv)">Top Left</text>
<line x1="621.9" y1="244.5" x2="728.6" y2="244.5" stroke="#d6d6d6" stroke-width="0.5"/>
<line x1="671.4" y1="234.7" x2="671.4" y2="244.5" stroke="#d6d6d6" stroke-width="0.5"/>
<line x1="621.9" y1="234.7" x2="621.9" y2="244.5" stroke="#d6d6d6" stroke-width="0.5"/>
<text x="630.9" y="251.49" font-size="5.7" fill="#1e1e1e" textLength="27.38" lengthAdjust="spacingAndGlyphs" clip-path="url(#cn)">Watermark</text>
<text x="673.2" y="251.49" font-size="5.7" fill="#1e1e1e" textLength="16.31" lengthAdjust="spacingAndGlyphs" clip-path="url(#cv)">(none)</text>
<path d="M625.25 247.85 L627.12 249.55 L625.25 251.25 Z" fill="#3c3c3c"/>
<line x1="613.5" y1="254.4" x2="728.6" y2="254.4" stroke="#d6d6d6" stroke-width="0.5"/>
<line x1="671.4" y1="244.5" x2="671.4" y2="254.4" stroke="#d6d6d6" stroke-width="0.5"/>
<line x1="621.9" y1="244.5" x2="621.9" y2="254.4" stroke="#d6d6d6" stroke-width="0.5"/>
<text x="623.8" y="261.41" font-size="6.5" fill="#1470c4" textLength="26.2" lengthAdjust="spacingAndGlyphs" font-weight="bold">Behavior</text>
<path d="M720.8 260.1 l1.5 -1.8 l1.5 1.8 z" fill="#3c3c3c"/>
<line x1="621.9" y1="263.8" x2="728.6" y2="263.8" stroke="#d6d6d6" stroke-width="0.5"/>
<text x="630.9" y="270.39" font-size="5.7" fill="#1e1e1e" textLength="35.12" lengthAdjust="spacingAndGlyphs" clip-path="url(#cn)">Display Name</text>
<text x="673.2" y="270.39" font-size="5.7" fill="#1e1e1e" textLength="51.11" lengthAdjust="spacingAndGlyphs" clip-path="url(#cv)">XtraReportUserDe...</text>
<line x1="621.9" y1="272.9" x2="728.6" y2="272.9" stroke="#d6d6d6" stroke-width="0.5"/>
<line x1="671.4" y1="263.8" x2="671.4" y2="272.9" stroke="#d6d6d6" stroke-width="0.5"/>
<line x1="621.9" y1="263.8" x2="621.9" y2="272.9" stroke="#d6d6d6" stroke-width="0.5"/>
<text x="630.9" y="279.19" font-size="5.7" fill="#1e1e1e" textLength="37.32" lengthAdjust="spacingAndGlyphs" clip-path="url(#cn)">Export Options</text>
<text x="673.2" y="279.19" font-size="5.7" fill="#1e1e1e" textLength="41.08" lengthAdjust="spacingAndGlyphs" clip-path="url(#cv)">(Export Options)</text>
<path d="M625.25 275.55 L627.12 277.25 L625.25 278.95 Z" fill="#3c3c3c"/>
<line x1="621.9" y1="281.4" x2="728.6" y2="281.4" stroke="#d6d6d6" stroke-width="0.5"/>
<line x1="671.4" y1="272.9" x2="671.4" y2="281.4" stroke="#d6d6d6" stroke-width="0.5"/>
<line x1="621.9" y1="272.9" x2="621.9" y2="281.4" stroke="#d6d6d6" stroke-width="0.5"/>
<text x="630.9" y="288.36" font-size="5.7" fill="#1e1e1e" textLength="68.38" lengthAdjust="spacingAndGlyphs" clip-path="url(#cn)">Horizontal Content Splitting</text>
<text x="673.2" y="288.36" font-size="5.7" fill="#1e1e1e" textLength="14.11" lengthAdjust="spacingAndGlyphs" clip-path="url(#cv)">Exact</text>
<line x1="621.9" y1="291.25" x2="728.6" y2="291.25" stroke="#d6d6d6" stroke-width="0.5"/>
<line x1="671.4" y1="281.4" x2="671.4" y2="291.25" stroke="#d6d6d6" stroke-width="0.5"/>
<line x1="621.9" y1="281.4" x2="621.9" y2="291.25" stroke="#d6d6d6" stroke-width="0.5"/>
<text x="630.9" y="298.21" font-size="5.7" fill="#1e1e1e" textLength="36.38" lengthAdjust="spacingAndGlyphs" clip-path="url(#cn)">Measure Units</text>
<text x="673.2" y="298.21" font-size="5.7" fill="#1e1e1e" textLength="51.13" lengthAdjust="spacingAndGlyphs" clip-path="url(#cv)">Hundredths of an I...</text>
<line x1="621.9" y1="301.1" x2="728.6" y2="301.1" stroke="#d6d6d6" stroke-width="0.5"/>
<line x1="671.4" y1="291.25" x2="671.4" y2="301.1" stroke="#d6d6d6" stroke-width="0.5"/>
<line x1="621.9" y1="291.25" x2="621.9" y2="301.1" stroke="#d6d6d6" stroke-width="0.5"/>
<text x="630.9" y="308.06" font-size="5.7" fill="#1e1e1e" textLength="41.1" lengthAdjust="spacingAndGlyphs" clip-path="url(#cn)">Script Language</text>
<text x="673.2" y="308.06" font-size="5.7" fill="#1e1e1e" textLength="7.21" lengthAdjust="spacingAndGlyphs" clip-path="url(#cv)">C#</text>
<line x1="621.9" y1="310.95" x2="728.6" y2="310.95" stroke="#d6d6d6" stroke-width="0.5"/>
<line x1="671.4" y1="301.1" x2="671.4" y2="310.95" stroke="#d6d6d6" stroke-width="0.5"/>
<line x1="621.9" y1="301.1" x2="621.9" y2="310.95" stroke="#d6d6d6" stroke-width="0.5"/>
<text x="630.9" y="317.91" font-size="5.7" fill="#1e1e1e" textLength="44.85" lengthAdjust="spacingAndGlyphs" clip-path="url(#cn)">Script References</text>
<text x="673.2" y="317.91" font-size="5.7" fill="#1e1e1e" textLength="32.61" lengthAdjust="spacingAndGlyphs" clip-path="url(#cv)">String[] Array</text>
<path d="M625.25 314.28 L627.12 315.98 L625.25 317.68 Z" fill="#3c3c3c"/>
<line x1="621.9" y1="320.8" x2="728.6" y2="320.8" stroke="#d6d6d6" stroke-width="0.5"/>
<line x1="671.4" y1="310.95" x2="671.4" y2="320.8" stroke="#d6d6d6" stroke-width="0.5"/>
<line x1="621.9" y1="310.95" x2="621.9" y2="320.8" stroke="#d6d6d6" stroke-width="0.5"/>
</g>
<rect x="728.6" y="98.9" width="9.2" height="219.6" fill="#ebebeb"/>
<rect x="728.6" y="98.9" width="9.2" height="9.6" fill="#fbfbfb" stroke="#d6d6d6" stroke-width="0.5"/>
<path d="M731.7 104.7 L733.2 102.9 L734.7 104.7" fill="none" stroke="#3a3a3a" stroke-width="0.9"/>
<path d="M731.7 313.4 L733.2 315.2 L734.7 313.4" fill="none" stroke="#3a3a3a" stroke-width="0.9"/>
<rect x="728.8" y="108.6" width="8.8" height="67.4" fill="#c9c9c9"/>
<line x1="728.6" y1="98.9" x2="728.6" y2="318.5" stroke="#d0d0d0" stroke-width="0.5"/>
<rect x="613.5" y="98.9" width="124.3" height="219.6" fill="none" stroke="#bdbdbd" stroke-width="0.6"/>
<rect x="671.4" y="322.1" width="0.95" height="0.95" fill="#4a4a4a"/>
<rect x="673.35" y="322.1" width="0.95" height="0.95" fill="#4a4a4a"/>
<rect x="675.3" y="322.1" width="0.95" height="0.95" fill="#4a4a4a"/>
<rect x="677.25" y="322.1" width="0.95" height="0.95" fill="#4a4a4a"/>
<rect x="679.2" y="322.1" width="0.95" height="0.95" fill="#4a4a4a"/>
<rect x="612.8" y="325.6" width="125.8" height="64.4" fill="#fff" stroke="#c8c8c8" stroke-width="0.6"/>
<rect x="741.6" y="54.8" width="127.4" height="419.5" fill="#fff" stroke="#c9c9c9" stroke-width="0.8"/>
<text x="748.6" y="65.88" font-size="7.6" fill="#1a1a1a" textLength="25.6" lengthAdjust="spacingAndGlyphs">Field List</text>
<rect x="849.4" y="61.3" width="1.7" height="2.2" fill="#444"/>
<rect x="848.6" y="63.4" width="3.2" height="0.6" fill="#444"/>
<rect x="849.95" y="64.05" width="0.5" height="1.3" fill="#444"/>
<line x1="858.1" y1="61.3" x2="862.1" y2="65.3" stroke="#3a3a3a" stroke-width="0.85"/>
<line x1="858.1" y1="65.3" x2="862.1" y2="61.3" stroke="#3a3a3a" stroke-width="0.85"/>
<rect x="742.4" y="72.6" width="125.9" height="401" fill="#fff" stroke="#c2c2c2" stroke-width="0.7"/>
<rect x="761.9" y="73.7" width="45.7" height="8.5" fill="#d9e8f6"/>
<path d="M749.75 76.85 L749.75 79.55 L747.05 79.55 Z" fill="#444"/>
<g transform="translate(753 74)">
<rect x="0.3" y="0.6" width="7.6" height="6.8" fill="#f4f6fa" stroke="#8d9bb5" stroke-width="0.5"/>
<rect x="0.3" y="0.4" width="7.6" height="1.7" fill="#e8913a"/>
<line x1="2.9" y1="2.1" x2="2.9" y2="7.4" stroke="#7f8fb0" stroke-width="0.5"/>
<line x1="5.4" y1="2.1" x2="5.4" y2="7.4" stroke="#7f8fb0" stroke-width="0.5"/>
<line x1="0.3" y1="4.6" x2="7.9" y2="4.6" stroke="#b4bfd3" stroke-width="0.4"/>
</g>
<text x="763.5" y="79.94" font-size="5.7" fill="#1e1e1e" textLength="12" lengthAdjust="spacingAndGlyphs">Data</text>
<path d="M756.35 85.8 L758.22 87.5 L756.35 89.2 Z" fill="#3c3c3c"/>
<g transform="translate(762.4 83.4)">
<rect x="0.3" y="0.6" width="7.6" height="6.8" fill="#f4f6fa" stroke="#8d9bb5" stroke-width="0.5"/>
<rect x="0.3" y="0.4" width="7.6" height="1.7" fill="#e8913a"/>
<line x1="2.9" y1="2.1" x2="2.9" y2="7.4" stroke="#7f8fb0" stroke-width="0.5"/>
<line x1="5.4" y1="2.1" x2="5.4" y2="7.4" stroke="#7f8fb0" stroke-width="0.5"/>
<line x1="0.3" y1="4.6" x2="7.9" y2="4.6" stroke="#b4bfd3" stroke-width="0.4"/>
</g>
<text x="773.1" y="89.34" font-size="5.7" fill="#1e1e1e" textLength="28.6" lengthAdjust="spacingAndGlyphs">ReportData</text>
<g transform="translate(753 92.8)">
<rect x="0.3" y="0.8" width="7.6" height="6.4" fill="#f4f6fa" stroke="#8d9bb5" stroke-width="0.5"/>
<rect x="0.3" y="0.6" width="7.6" height="1.6" fill="#e8913a"/>
<text x="2.7" y="6.36" font-size="4.6" fill="#2a55a8" font-weight="bold">?</text>
</g>
<text x="763.5" y="98.84" font-size="5.7" fill="#1e1e1e" textLength="28.5" lengthAdjust="spacingAndGlyphs">Parameters</text>
<rect x="871.4" y="54.8" width="124" height="419.5" fill="#fff" stroke="#c9c9c9" stroke-width="0.8"/>
<text x="878.2" y="65.88" font-size="7.6" fill="#1a73c7" textLength="50.1" lengthAdjust="spacingAndGlyphs">Report Explorer</text>
<rect x="976.1" y="61.3" width="1.7" height="2.2" fill="#444"/>
<rect x="975.3" y="63.4" width="3.2" height="0.6" fill="#444"/>
<rect x="976.65" y="64.05" width="0.5" height="1.3" fill="#444"/>
<line x1="984.8" y1="61.3" x2="988.8" y2="65.3" stroke="#3a3a3a" stroke-width="0.85"/>
<line x1="984.8" y1="65.3" x2="988.8" y2="61.3" stroke="#3a3a3a" stroke-width="0.85"/>
<rect x="872.1" y="72.6" width="122.7" height="401" fill="#fff" stroke="#c2c2c2" stroke-width="0.7"/>
<rect x="892.1" y="73.6" width="102" height="8.6" fill="#cfe2f4"/>
<path d="M879.55 76.65 L879.55 79.35 L876.85 79.35 Z" fill="#444"/>
<g transform="translate(883.3 73.8)">
<rect x="0.3" y="0.9" width="5.4" height="6.8" fill="#dfe9f7" stroke="#5b83c2" stroke-width="0.6" rx="0.5"/>
<rect x="1.6" y="0.1" width="2.8" height="1.5" fill="#5b83c2" rx="0.4"/>
<rect x="3.1" y="3.6" width="4.4" height="2.1" fill="#e8813a"/>
<rect x="3.1" y="5.7" width="4.4" height="2.1" fill="#58a838"/>
</g>
<text x="893.1" y="79.84" font-size="5.7" fill="#1e1e1e" textLength="61.9" lengthAdjust="spacingAndGlyphs">XtraReportUserDesigned</text>
<g transform="translate(892.5 83.26)">
<rect x="0.4" y="0.4" width="6.4" height="7.2" fill="#eef3fb" stroke="#6f94d0" stroke-width="0.6" rx="0.5"/>
<rect x="0.4" y="0.2" width="6.4" height="1.3" fill="#e8813a"/>
</g>
<text x="903" y="89.2" font-size="5.7" fill="#1e1e1e" textLength="40.1" lengthAdjust="spacingAndGlyphs">topMarginBand1</text>
<g transform="translate(892.5 92.62)">
<rect x="0.4" y="0.4" width="6.4" height="7.2" fill="#eef3fb" stroke="#6f94d0" stroke-width="0.6" rx="0.5"/>
<rect x="0.8" y="1.2" width="5.6" height="2.2" fill="#e8813a"/>
</g>
<text x="903" y="98.56" font-size="5.7" fill="#1e1e1e" textLength="30.2" lengthAdjust="spacingAndGlyphs">PageHeader</text>
<g transform="translate(892.5 101.98)">
<rect x="0.4" y="0.4" width="6.4" height="7.2" fill="#dfe8f6" stroke="#6f94d0" stroke-width="0.6" rx="0.5"/>
<rect x="1.7" y="1.6" width="3.8" height="4.8" fill="#f6f8fc" stroke="#8a98b4" stroke-width="0.4"/>
<line x1="2.6" y1="3" x2="4.6" y2="3" stroke="#7d8cab" stroke-width="0.4"/>
<line x1="2.6" y1="4.4" x2="4.6" y2="4.4" stroke="#7d8cab" stroke-width="0.4"/>
</g>
<text x="903" y="107.92" font-size="5.7" fill="#1e1e1e" textLength="13.8" lengthAdjust="spacingAndGlyphs">Detail</text>
<g transform="translate(892.5 111.34)">
<rect x="0.6" y="1" width="5.8" height="6.7" fill="#dfe9f7" stroke="#4d7fc4" stroke-width="0.6" rx="0.6"/>
<rect x="1.9" y="0.1" width="3.2" height="1.6" fill="#4d7fc4" rx="0.4"/>
<rect x="1" y="4.6" width="5" height="2.4" fill="#58a838"/>
</g>
<text x="903" y="117.28" font-size="5.7" fill="#1e1e1e" textLength="28.6" lengthAdjust="spacingAndGlyphs">PageFooter</text>
<g transform="translate(892.5 120.7)">
<rect x="0.4" y="0.4" width="6.4" height="7.2" fill="#eef3fb" stroke="#6f94d0" stroke-width="0.6" rx="0.5"/>
<rect x="0.4" y="6.5" width="6.4" height="1.3" fill="#58a838"/>
</g>
<text x="903" y="126.64" font-size="5.7" fill="#1e1e1e" textLength="49.4" lengthAdjust="spacingAndGlyphs">bottomMarginBand1</text>
<g transform="translate(883.3 130.06)">
<rect x="0.3" y="1.2" width="5.8" height="6.4" fill="#eef2f9" stroke="#8d9bb5" stroke-width="0.5"/>
<line x1="2" y1="6" x2="7.4" y2="0.4" stroke="#c8552f" stroke-width="1"/>
<path d="M1.2 6.8 L2.6 5 L3.2 5.8 Z" fill="#333"/>
</g>
<text x="893.1" y="136" font-size="5.7" fill="#1e1e1e" textLength="14.9" lengthAdjust="spacingAndGlyphs">Styles</text>
<g transform="translate(883.3 139.42)">
<rect x="0.3" y="0.6" width="6" height="7" fill="#eef2f9" stroke="#8d9bb5" stroke-width="0.5"/>
<path d="M2.4 0.2 H7.6 L5.6 2.8 V5.4 L4.4 4.6 V2.8 Z" fill="#3f8be0" stroke="#245fb0" stroke-width="0.3"/>
</g>
<text x="893.1" y="145.36" font-size="5.7" fill="#1e1e1e" textLength="42.1" lengthAdjust="spacingAndGlyphs">Formatting Rules</text>
<g transform="translate(883.3 148.78)">
<circle cx="3.8" cy="4" r="3.3" fill="#c9ccd2" stroke="#8c9097" stroke-width="0.6"/>
<circle cx="3.8" cy="4" r="1.3" fill="#eef0f3" stroke="#9a9ea6" stroke-width="0.4"/>
</g>
<text x="893.1" y="154.72" font-size="5.7" fill="#1e1e1e" textLength="31.1" lengthAdjust="spacingAndGlyphs">Components</text>
<rect x="19.8" y="393.7" width="719.4" height="80.9" fill="#fff" stroke="#c9c9c9" stroke-width="0.8"/>
<text x="26.3" y="405.48" font-size="7.6" fill="#1a1a1a" textLength="49.7" lengthAdjust="spacingAndGlyphs">Group and Sort</text>
<rect x="719.2" y="400.6" width="1.7" height="2.2" fill="#444"/>
<rect x="718.4" y="402.7" width="3.2" height="0.6" fill="#444"/>
<rect x="719.75" y="403.35" width="0.5" height="1.3" fill="#444"/>
<line x1="728" y1="400.6" x2="732" y2="404.6" stroke="#3a3a3a" stroke-width="0.85"/>
<line x1="728" y1="404.6" x2="732" y2="400.6" stroke="#3a3a3a" stroke-width="0.85"/>
<rect x="26.2" y="416.2" width="4.6" height="4.6" fill="#7fa6dc" stroke="#3f69b0" stroke-width="0.5"/>
<rect x="28.2" y="418" width="5" height="5" fill="#5cb944" stroke="#2f8a22" stroke-width="0.6" rx="0.6"/>
<rect x="29.4" y="419" width="2.6" height="1.4" fill="#a8e08e" opacity="0.8"/>
<path d="M25.4 421.6 V423.4 H27.2 M31.6 415.6 H33.4 V417.4" fill="none" stroke="#333" stroke-width="0.5"/>
<text x="36" y="421.94" font-size="6.6" fill="#2a2a2a" textLength="34.6" lengthAdjust="spacingAndGlyphs">Add a Group</text>
<path d="M71.9 419.2 h2.6 l-1.3 1.6 z" fill="#222"/>
<path d="M82.4 416 H88.2 L85.3 420.8 Z" fill="#5cb944" stroke="#2f8a22" stroke-width="0.5"/>
<path d="M84.2 416.6 L87.2 421.2" fill="none" stroke="#3a3a3a" stroke-width="0.5"/>
<path d="M86.2 423.2 L88.2 418.8 L90.6 423.2 Z" fill="#7fa6dc" stroke="#3f69b0" stroke-width="0.5"/>
<text x="92" y="421.94" font-size="6.6" fill="#2a2a2a" textLength="29.3" lengthAdjust="spacingAndGlyphs">Add a Sort</text>
<path d="M122.6 419.2 h2.6 l-1.3 1.6 z" fill="#222"/>
<line x1="132.6" y1="417.1" x2="137.4" y2="422.3" stroke="#b2b2b2" stroke-width="1.5" stroke-linecap="round"/>
<line x1="137.4" y1="417.1" x2="132.6" y2="422.3" stroke="#b2b2b2" stroke-width="1.5" stroke-linecap="round"/>
<text x="140.8" y="421.94" font-size="6.6" fill="#a0a0a0" textLength="16.8" lengthAdjust="spacingAndGlyphs">Delete</text>
<line x1="162.1" y1="414.6" x2="162.1" y2="424.4" stroke="#c9c9c9" stroke-width="0.7"/>
<circle cx="170.8" cy="419.7" r="3.8" fill="#b8b8b8"/>
<circle cx="170.8" cy="419.7" r="1.5" fill="#e2e2e2"/>
<text x="177.2" y="421.94" font-size="6.6" fill="#a0a0a0" textLength="24.5" lengthAdjust="spacingAndGlyphs">Move Up</text>
<circle cx="211.2" cy="419.7" r="3.8" fill="#b8b8b8"/>
<circle cx="211.2" cy="419.7" r="1.5" fill="#e2e2e2"/>
<text x="217.8" y="421.94" font-size="6.6" fill="#a0a0a0" textLength="33.1" lengthAdjust="spacingAndGlyphs">Move Down</text>
<rect x="20.6" y="427" width="717" height="31.4" fill="#fff" stroke="#c6c6c6" stroke-width="0.6"/>
<line x1="20.6" y1="437.2" x2="737.6" y2="437.2" stroke="#c6c6c6" stroke-width="0.6"/>
<line x1="138.8" y1="427" x2="138.8" y2="437.2" stroke="#c6c6c6" stroke-width="0.6"/>
<line x1="186.4" y1="427" x2="186.4" y2="437.2" stroke="#c6c6c6" stroke-width="0.6"/>
<line x1="234.6" y1="427" x2="234.6" y2="437.2" stroke="#c6c6c6" stroke-width="0.6"/>
<line x1="282.5" y1="427" x2="282.5" y2="437.2" stroke="#c6c6c6" stroke-width="0.6"/>
<line x1="736.9" y1="427.3" x2="736.9" y2="437" stroke="#cdcdcd" stroke-width="1.2"/>
<text x="23" y="434.1" font-size="5.6" fill="#1e1e1e" textLength="27" lengthAdjust="spacingAndGlyphs">Field Name</text>
<text x="141.3" y="434.1" font-size="5.6" fill="#1e1e1e" textLength="26.1" lengthAdjust="spacingAndGlyphs">Sort Order</text>
<text x="189" y="434.1" font-size="5.6" fill="#1e1e1e" textLength="32.6" lengthAdjust="spacingAndGlyphs">Show Header</text>
<text x="236.6" y="434.1" font-size="5.6" fill="#1e1e1e" textLength="31" lengthAdjust="spacingAndGlyphs">Show Footer</text>
<path d="M27.6 463 H32.4 V465.8 H27.6 Z" fill="#6f9fd8" stroke="#3c6cb0" stroke-width="0.4"/>
<path d="M29.4 465.4 H35 L32.2 469.6 Z" fill="#4caf3a" stroke="#2f7f22" stroke-width="0.4"/>
<text x="37.7" y="468.14" font-size="5.7" fill="#1a73c7" textLength="37.8" lengthAdjust="spacingAndGlyphs">Group and Sort</text>
<line x1="82.3" y1="460.4" x2="82.3" y2="472.4" stroke="#d0d0d0" stroke-width="0.6"/>
<rect x="88.3" y="462.6" width="5.4" height="6.2" fill="#eef2f9" stroke="#5a6f98" stroke-width="0.5"/>
<rect x="89.4" y="463.8" width="1.6" height="1.6" fill="#3f6fc0"/>
<rect x="91.4" y="463.8" width="1.6" height="1.6" fill="#3f6fc0"/>
<circle cx="93.4" cy="468.2" r="2.3" fill="#d8302a"/>
<text x="97.9" y="468.14" font-size="5.7" fill="#1e1e1e" textLength="33.1" lengthAdjust="spacingAndGlyphs">Scripts Errors</text>
<line x1="138" y1="460.4" x2="138" y2="472.4" stroke="#d0d0d0" stroke-width="0.6"/>
<rect x="-6" y="475.4" width="1009" height="19.6" fill="#0072c6"/>
</g>
</svg>
</body></html>
